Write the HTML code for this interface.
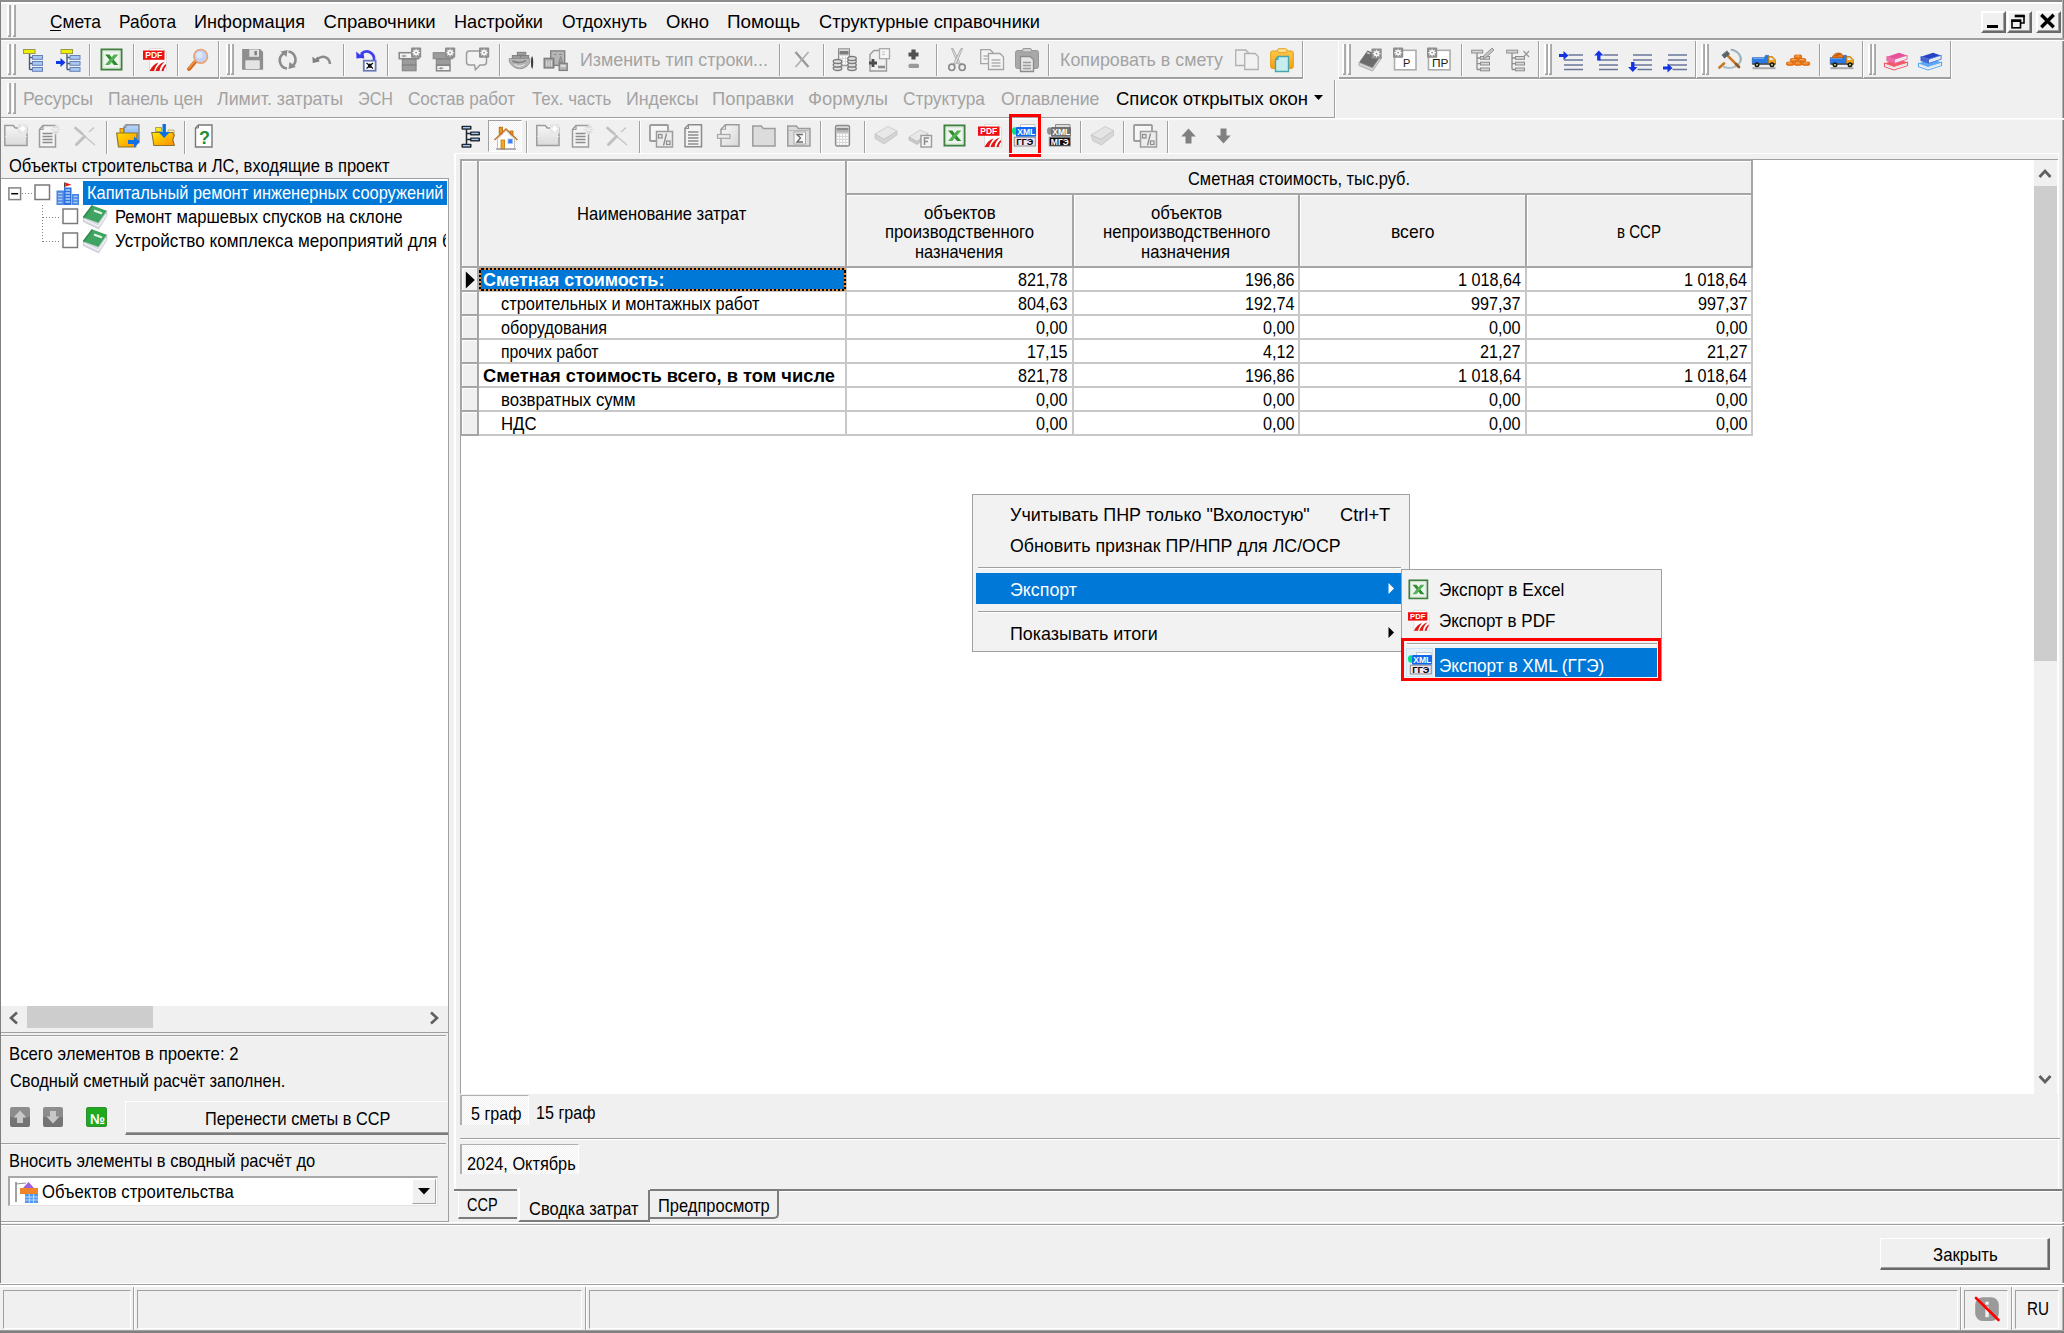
<!DOCTYPE html>
<html><head><meta charset="utf-8"><title>Smeta</title>
<style>
html,body{margin:0;padding:0;}
body{width:2064px;height:1333px;overflow:hidden;background:#f0f0f0;position:relative;font-family:"Liberation Sans",sans-serif;}
div,span,svg{position:absolute;box-sizing:border-box;}
span{white-space:pre;line-height:1;transform-origin:0 0;}
svg{overflow:visible;}
</style></head><body>
<div style="left:0px;top:0px;width:2064px;height:2px;background:#8c8c8c;"></div>
<div style="left:0px;top:2px;width:2064px;height:2px;background:#ffffff;"></div>
<div style="left:0px;top:2px;width:1px;height:1281px;background:#808080;"></div>
<div style="left:2062px;top:0px;width:1px;height:1333px;background:#b4b4b4;"></div>
<div style="left:2063px;top:0px;width:1px;height:1333px;background:#7c7c7c;"></div>
<div style="left:0px;top:1331px;width:2064px;height:2px;background:#808080;"></div>
<svg style="left:7px;top:5px;" width="4" height="32" viewBox="0 0 4 32"><rect x="0" y="0" width="2.200" height="32" fill="#fff"/><rect x="2.200" y="0" width="1.700" height="32" fill="#a0a0a0"/><rect x="1" y="30.5" width="2.500" height="1.500" fill="#a0a0a0"/></svg>
<svg style="left:11.8px;top:5px;" width="4" height="32" viewBox="0 0 4 32"><rect x="0" y="0" width="2.200" height="32" fill="#fff"/><rect x="2.200" y="0" width="1.700" height="32" fill="#a0a0a0"/><rect x="1" y="30.5" width="2.500" height="1.500" fill="#a0a0a0"/></svg>
<span style="left:50.00px;top:13.24px;font-size:18.5px;color:#000;transform:scaleX(0.9390);">Смета</span>
<span style="left:119.00px;top:13.24px;font-size:18.5px;color:#000;transform:scaleX(0.9337);">Работа</span>
<span style="left:194.00px;top:13.24px;font-size:18.5px;color:#000;transform:scaleX(0.9799);">Информация</span>
<span style="left:323.60px;top:13.24px;font-size:18.5px;color:#000;">Справочники</span>
<span style="left:454.00px;top:13.24px;font-size:18.5px;color:#000;transform:scaleX(0.9811);">Настройки</span>
<span style="left:562.00px;top:13.24px;font-size:18.5px;color:#000;transform:scaleX(0.9449);">Отдохнуть</span>
<span style="left:666.00px;top:13.24px;font-size:18.5px;color:#000;">Окно</span>
<span style="left:727.00px;top:13.24px;font-size:18.5px;color:#000;transform:scaleX(1.0216);">Помощь</span>
<span style="left:819.00px;top:13.24px;font-size:18.5px;color:#000;transform:scaleX(0.9849);">Структурные справочники</span>
<div style="left:50px;top:30px;width:11px;height:1px;background:#000;"></div>
<div style="left:0px;top:38px;width:2064px;height:2px;background:#a0a0a0;"></div>
<div style="left:0px;top:40px;width:2064px;height:1px;background:#ffffff;"></div>
<div style="left:1981px;top:10.5px;width:25px;height:22px;background:#f0f0f0;border-top:2px solid #fff;border-left:2px solid #fff;border-right:2px solid #696969;border-bottom:2px solid #696969;box-shadow:inset -1px -1px 0 #a0a0a0;"></div>
<div style="left:2007px;top:10.5px;width:25px;height:22px;background:#f0f0f0;border-top:2px solid #fff;border-left:2px solid #fff;border-right:2px solid #696969;border-bottom:2px solid #696969;box-shadow:inset -1px -1px 0 #a0a0a0;"></div>
<div style="left:2035.5px;top:10.5px;width:25px;height:22px;background:#f0f0f0;border-top:2px solid #fff;border-left:2px solid #fff;border-right:2px solid #696969;border-bottom:2px solid #696969;box-shadow:inset -1px -1px 0 #a0a0a0;"></div>
<div style="left:1987px;top:25px;width:10.5px;height:3px;background:#000;"></div>
<svg style="left:2007px;top:10.5px;" width="25" height="22" viewBox="0 0 25 22"><path d="M8.500 5h8.500v7h-3" fill="none" stroke="#000" stroke-width="1.600"/><path d="M7.700 5h10" stroke="#000" stroke-width="2.600"/><rect x="5" y="9.500" width="8.500" height="7.300" fill="none" stroke="#000" stroke-width="1.600"/><path d="M4.200 9.700h10" stroke="#000" stroke-width="2.600"/></svg>
<svg style="left:2035.5px;top:10.5px;" width="25" height="22" viewBox="0 0 25 22"><path d="M6.500 5l10 10M16.500 5l-10 10" stroke="#000" stroke-width="3.400" stroke-linecap="square"/></svg>
<div style="left:0px;top:77px;width:1303px;height:2px;background:#a0a0a0;"></div>
<div style="left:0px;top:79px;width:1303px;height:1px;background:#ffffff;"></div>
<div style="left:1338px;top:77px;width:613px;height:2px;background:#a0a0a0;"></div>
<div style="left:1338px;top:79px;width:613px;height:1px;background:#ffffff;"></div>
<div style="left:218px;top:41px;width:1px;height:38px;background:#a0a0a0;"></div>
<div style="left:219px;top:41px;width:1px;height:38px;background:#ffffff;"></div>
<div style="left:1302px;top:41px;width:1px;height:38px;background:#a0a0a0;"></div>
<div style="left:1303px;top:41px;width:1px;height:38px;background:#ffffff;"></div>
<div style="left:1338px;top:40px;width:613px;height:1px;background:#ffffff;"></div>
<div style="left:1538px;top:41px;width:1px;height:38px;background:#a0a0a0;"></div>
<div style="left:1539px;top:41px;width:1px;height:37px;background:#ffffff;"></div>
<div style="left:1695px;top:41px;width:1px;height:38px;background:#a0a0a0;"></div>
<div style="left:1696px;top:41px;width:1px;height:37px;background:#ffffff;"></div>
<div style="left:1862px;top:41px;width:1px;height:38px;background:#a0a0a0;"></div>
<div style="left:1863px;top:41px;width:1px;height:37px;background:#ffffff;"></div>
<div style="left:1950px;top:41px;width:1px;height:38px;background:#a0a0a0;"></div>
<div style="left:1951px;top:41px;width:1px;height:37px;background:#ffffff;"></div>
<div style="left:1338px;top:41px;width:1px;height:38px;background:#ffffff;"></div>
<svg style="left:7px;top:44px;" width="4" height="31" viewBox="0 0 4 31"><rect x="0" y="0" width="2.200" height="31" fill="#fff"/><rect x="2.200" y="0" width="1.700" height="31" fill="#a0a0a0"/><rect x="1" y="29.5" width="2.500" height="1.500" fill="#a0a0a0"/></svg>
<svg style="left:11.8px;top:44px;" width="4" height="31" viewBox="0 0 4 31"><rect x="0" y="0" width="2.200" height="31" fill="#fff"/><rect x="2.200" y="0" width="1.700" height="31" fill="#a0a0a0"/><rect x="1" y="29.5" width="2.500" height="1.500" fill="#a0a0a0"/></svg>
<svg style="left:225.5px;top:44px;" width="4" height="31" viewBox="0 0 4 31"><rect x="0" y="0" width="2.200" height="31" fill="#fff"/><rect x="2.200" y="0" width="1.700" height="31" fill="#a0a0a0"/><rect x="1" y="29.5" width="2.500" height="1.500" fill="#a0a0a0"/></svg>
<svg style="left:230.3px;top:44px;" width="4" height="31" viewBox="0 0 4 31"><rect x="0" y="0" width="2.200" height="31" fill="#fff"/><rect x="2.200" y="0" width="1.700" height="31" fill="#a0a0a0"/><rect x="1" y="29.5" width="2.500" height="1.500" fill="#a0a0a0"/></svg>
<svg style="left:1342px;top:44px;" width="4" height="31" viewBox="0 0 4 31"><rect x="0" y="0" width="2.200" height="31" fill="#fff"/><rect x="2.200" y="0" width="1.700" height="31" fill="#a0a0a0"/><rect x="1" y="29.5" width="2.500" height="1.500" fill="#a0a0a0"/></svg>
<svg style="left:1346.8px;top:44px;" width="4" height="31" viewBox="0 0 4 31"><rect x="0" y="0" width="2.200" height="31" fill="#fff"/><rect x="2.200" y="0" width="1.700" height="31" fill="#a0a0a0"/><rect x="1" y="29.5" width="2.500" height="1.500" fill="#a0a0a0"/></svg>
<svg style="left:1543.5px;top:44px;" width="4" height="31" viewBox="0 0 4 31"><rect x="0" y="0" width="2.200" height="31" fill="#fff"/><rect x="2.200" y="0" width="1.700" height="31" fill="#a0a0a0"/><rect x="1" y="29.5" width="2.500" height="1.500" fill="#a0a0a0"/></svg>
<svg style="left:1548.3px;top:44px;" width="4" height="31" viewBox="0 0 4 31"><rect x="0" y="0" width="2.200" height="31" fill="#fff"/><rect x="2.200" y="0" width="1.700" height="31" fill="#a0a0a0"/><rect x="1" y="29.5" width="2.500" height="1.500" fill="#a0a0a0"/></svg>
<svg style="left:1700.5px;top:44px;" width="4" height="31" viewBox="0 0 4 31"><rect x="0" y="0" width="2.200" height="31" fill="#fff"/><rect x="2.200" y="0" width="1.700" height="31" fill="#a0a0a0"/><rect x="1" y="29.5" width="2.500" height="1.500" fill="#a0a0a0"/></svg>
<svg style="left:1705.3px;top:44px;" width="4" height="31" viewBox="0 0 4 31"><rect x="0" y="0" width="2.200" height="31" fill="#fff"/><rect x="2.200" y="0" width="1.700" height="31" fill="#a0a0a0"/><rect x="1" y="29.5" width="2.500" height="1.500" fill="#a0a0a0"/></svg>
<svg style="left:1867.5px;top:44px;" width="4" height="31" viewBox="0 0 4 31"><rect x="0" y="0" width="2.200" height="31" fill="#fff"/><rect x="2.200" y="0" width="1.700" height="31" fill="#a0a0a0"/><rect x="1" y="29.5" width="2.500" height="1.500" fill="#a0a0a0"/></svg>
<svg style="left:1872.3px;top:44px;" width="4" height="31" viewBox="0 0 4 31"><rect x="0" y="0" width="2.200" height="31" fill="#fff"/><rect x="2.200" y="0" width="1.700" height="31" fill="#a0a0a0"/><rect x="1" y="29.5" width="2.500" height="1.500" fill="#a0a0a0"/></svg>
<div style="left:89px;top:44px;width:1px;height:32px;background:#a0a0a0;"></div>
<div style="left:90px;top:44px;width:1px;height:32px;background:#ffffff;"></div>
<div style="left:133px;top:44px;width:1px;height:32px;background:#a0a0a0;"></div>
<div style="left:134px;top:44px;width:1px;height:32px;background:#ffffff;"></div>
<div style="left:177px;top:44px;width:1px;height:32px;background:#a0a0a0;"></div>
<div style="left:178px;top:44px;width:1px;height:32px;background:#ffffff;"></div>
<div style="left:343px;top:44px;width:1px;height:32px;background:#a0a0a0;"></div>
<div style="left:344px;top:44px;width:1px;height:32px;background:#ffffff;"></div>
<div style="left:387px;top:44px;width:1px;height:32px;background:#a0a0a0;"></div>
<div style="left:388px;top:44px;width:1px;height:32px;background:#ffffff;"></div>
<div style="left:499px;top:44px;width:1px;height:32px;background:#a0a0a0;"></div>
<div style="left:500px;top:44px;width:1px;height:32px;background:#ffffff;"></div>
<div style="left:779px;top:44px;width:1px;height:32px;background:#a0a0a0;"></div>
<div style="left:780px;top:44px;width:1px;height:32px;background:#ffffff;"></div>
<div style="left:823px;top:44px;width:1px;height:32px;background:#a0a0a0;"></div>
<div style="left:824px;top:44px;width:1px;height:32px;background:#ffffff;"></div>
<div style="left:936px;top:44px;width:1px;height:32px;background:#a0a0a0;"></div>
<div style="left:937px;top:44px;width:1px;height:32px;background:#ffffff;"></div>
<div style="left:1048px;top:44px;width:1px;height:32px;background:#a0a0a0;"></div>
<div style="left:1049px;top:44px;width:1px;height:32px;background:#ffffff;"></div>
<div style="left:1461px;top:44px;width:1px;height:32px;background:#a0a0a0;"></div>
<div style="left:1462px;top:44px;width:1px;height:32px;background:#ffffff;"></div>
<div style="left:1819px;top:44px;width:1px;height:32px;background:#a0a0a0;"></div>
<div style="left:1820px;top:44px;width:1px;height:32px;background:#ffffff;"></div>
<span style="left:580.00px;top:51.24px;font-size:18.5px;color:#a3a3a3;transform:scaleX(0.9656);">Изменить тип строки...</span>
<span style="left:1060.00px;top:51.24px;font-size:18.5px;color:#a3a3a3;transform:scaleX(0.9628);">Копировать в смету</span>
<svg style="left:7px;top:83px;" width="4" height="31" viewBox="0 0 4 31"><rect x="0" y="0" width="2.200" height="31" fill="#fff"/><rect x="2.200" y="0" width="1.700" height="31" fill="#a0a0a0"/><rect x="1" y="29.5" width="2.500" height="1.500" fill="#a0a0a0"/></svg>
<svg style="left:11.8px;top:83px;" width="4" height="31" viewBox="0 0 4 31"><rect x="0" y="0" width="2.200" height="31" fill="#fff"/><rect x="2.200" y="0" width="1.700" height="31" fill="#a0a0a0"/><rect x="1" y="29.5" width="2.500" height="1.500" fill="#a0a0a0"/></svg>
<span style="left:23.00px;top:89.54px;font-size:18.5px;color:#a3a3a3;transform:scaleX(0.9595);">Ресурсы</span>
<span style="left:108.00px;top:89.54px;font-size:18.5px;color:#a3a3a3;transform:scaleX(0.9504);">Панель цен</span>
<span style="left:217.00px;top:89.54px;font-size:18.5px;color:#a3a3a3;transform:scaleX(0.9617);">Лимит. затраты</span>
<span style="left:358.00px;top:89.54px;font-size:18.5px;color:#a3a3a3;transform:scaleX(0.8743);">ЭСН</span>
<span style="left:408.00px;top:89.54px;font-size:18.5px;color:#a3a3a3;transform:scaleX(0.9228);">Состав работ</span>
<span style="left:531.60px;top:89.54px;font-size:18.5px;color:#a3a3a3;transform:scaleX(0.9130);">Тех. часть</span>
<span style="left:625.50px;top:89.54px;font-size:18.5px;color:#a3a3a3;transform:scaleX(0.9609);">Индексы</span>
<span style="left:711.70px;top:89.54px;font-size:18.5px;color:#a3a3a3;transform:scaleX(0.9935);">Поправки</span>
<span style="left:808.00px;top:89.54px;font-size:18.5px;color:#a3a3a3;transform:scaleX(0.9936);">Формулы</span>
<span style="left:903.00px;top:89.54px;font-size:18.5px;color:#a3a3a3;transform:scaleX(0.9341);">Структура</span>
<span style="left:1000.70px;top:89.54px;font-size:18.5px;color:#a3a3a3;transform:scaleX(0.9529);">Оглавление</span>
<span style="left:1116.00px;top:89.54px;font-size:18.5px;color:#000;">Список открытых окон</span>
<svg style="left:1314px;top:95px;" width="9" height="6" viewBox="0 0 9 6"><path d="M0 0h9l-4.500 5z" fill="#000"/></svg>
<div style="left:1334px;top:80px;width:1px;height:38px;background:#a0a0a0;"></div>
<div style="left:1335px;top:80px;width:1px;height:38px;background:#ffffff;"></div>
<div style="left:0px;top:117px;width:1335px;height:1px;background:#a0a0a0;"></div>
<div style="left:0px;top:118px;width:2064px;height:1px;background:#ffffff;"></div>
<div style="left:0px;top:119px;width:2064px;height:1px;background:#f8f8f8;"></div>
<div style="left:106px;top:121px;width:1px;height:33px;background:#a0a0a0;"></div>
<div style="left:107px;top:121px;width:1px;height:33px;background:#ffffff;"></div>
<div style="left:184px;top:121px;width:1px;height:33px;background:#a0a0a0;"></div>
<div style="left:185px;top:121px;width:1px;height:33px;background:#ffffff;"></div>
<div style="left:526px;top:121px;width:1px;height:33px;background:#a0a0a0;"></div>
<div style="left:527px;top:121px;width:1px;height:33px;background:#ffffff;"></div>
<div style="left:639px;top:121px;width:1px;height:33px;background:#a0a0a0;"></div>
<div style="left:640px;top:121px;width:1px;height:33px;background:#ffffff;"></div>
<div style="left:820px;top:121px;width:1px;height:33px;background:#a0a0a0;"></div>
<div style="left:821px;top:121px;width:1px;height:33px;background:#ffffff;"></div>
<div style="left:864px;top:121px;width:1px;height:33px;background:#a0a0a0;"></div>
<div style="left:865px;top:121px;width:1px;height:33px;background:#ffffff;"></div>
<div style="left:1080px;top:121px;width:1px;height:33px;background:#a0a0a0;"></div>
<div style="left:1081px;top:121px;width:1px;height:33px;background:#ffffff;"></div>
<div style="left:1123px;top:121px;width:1px;height:33px;background:#a0a0a0;"></div>
<div style="left:1124px;top:121px;width:1px;height:33px;background:#ffffff;"></div>
<div style="left:1167px;top:121px;width:1px;height:33px;background:#a0a0a0;"></div>
<div style="left:1168px;top:121px;width:1px;height:33px;background:#ffffff;"></div>
<div style="left:488px;top:120px;width:34px;height:32px;background:repeating-conic-gradient(#fff 0% 25%,#f0f0f0 0% 50%) 0 0/2px 2px;border-top:1px solid #a0a0a0;border-left:1px solid #a0a0a0;border-right:1px solid #fff;border-bottom:1px solid #fff;"></div>
<div style="left:1009px;top:114px;width:32px;height:43px;border:3px solid #ff0000;"></div>
<span style="left:8.50px;top:157.24px;font-size:18.5px;color:#000;transform:scaleX(0.8939);">Объекты строительства и ЛС, входящие в проект</span>
<div style="left:0px;top:178px;width:449px;height:855px;background:#ffffff;border:1px solid #a0a0a0;border-left:1px solid #808080;"></div>
<div style="left:83px;top:181px;width:364px;height:24px;background:#0078d7;"></div>
<span style="left:87.00px;top:184.24px;font-size:18.5px;color:#fff;transform:scaleX(0.8872);">Капитальный ремонт инженерных сооружений</span>
<span style="left:115.40px;top:208.24px;font-size:18.5px;color:#000;transform:scaleX(0.8967);">Ремонт маршевых спусков на склоне</span>
<div style="left:0;top:0;width:446px;height:400px;overflow:hidden">
<span style="left:115.40px;top:232.24px;font-size:18.5px;color:#000;transform:scaleX(0.9272);">Устройство комплекса мероприятий для бе</span>
</div>
<svg style="left:8px;top:187px;" width="14" height="14" viewBox="0 0 14 14"><rect x="0.900" y="0.900" width="11.700" height="11.700" fill="#fff" stroke="#848484" stroke-width="1.500"/><path d="M3.200 6.700h7" stroke="#000" stroke-width="1.500"/></svg>
<div style="left:22px;top:193px;width:10px;height:1px;background:repeating-linear-gradient(90deg,#808080 0 1px,transparent 1px 3px);"></div>
<div style="left:42px;top:205px;width:1px;height:37px;background:repeating-linear-gradient(180deg,#808080 0 1px,transparent 1px 3px);"></div>
<div style="left:43px;top:217px;width:17px;height:1px;background:repeating-linear-gradient(90deg,#808080 0 1px,transparent 1px 3px);"></div>
<div style="left:43px;top:241px;width:17px;height:1px;background:repeating-linear-gradient(90deg,#808080 0 1px,transparent 1px 3px);"></div>
<svg style="left:33.5px;top:184px;" width="17" height="17" viewBox="0 0 17 17"><rect x="1" y="1" width="14.500" height="14.500" fill="#fff" stroke="#7a7a7a" stroke-width="1.500"/></svg>
<svg style="left:62px;top:207.7px;" width="17" height="17" viewBox="0 0 17 17"><rect x="1" y="1" width="14.500" height="14.500" fill="#fff" stroke="#7a7a7a" stroke-width="1.500"/></svg>
<svg style="left:62px;top:231.7px;" width="17" height="17" viewBox="0 0 17 17"><rect x="1" y="1" width="14.500" height="14.500" fill="#fff" stroke="#7a7a7a" stroke-width="1.500"/></svg>
<div style="left:1px;top:1006px;width:447px;height:26px;background:#f0f0f0;"></div>
<div style="left:27px;top:1006px;width:126px;height:22px;background:#cdcdcd;"></div>
<svg style="left:8px;top:1011px;" width="12" height="14" viewBox="0 0 12 14"><path d="M9 1.500L3 7l6 5.500" fill="none" stroke="#606060" stroke-width="2.6"/></svg>
<svg style="left:428px;top:1011px;" width="12" height="14" viewBox="0 0 12 14"><path d="M3 1.500L9 7l-6 5.500" fill="none" stroke="#606060" stroke-width="2.6"/></svg>
<div style="left:1px;top:1035px;width:445px;height:1px;background:#a0a0a0;"></div>
<div style="left:1px;top:1036px;width:445px;height:1px;background:#f8f8f8;"></div>
<span style="left:8.50px;top:1045.24px;font-size:18.5px;color:#000;transform:scaleX(0.9043);">Всего элементов в проекте: 2</span>
<span style="left:9.70px;top:1072.24px;font-size:18.5px;color:#000;transform:scaleX(0.8873);">Сводный сметный расчёт заполнен.</span>
<div style="left:10px;top:1107px;width:20px;height:20px;border-radius:2px;background:linear-gradient(#8e8e8e,#8a8a8a 50%,#767676 52%,#727272);"></div>
<div style="left:43px;top:1107px;width:20px;height:20px;border-radius:2px;background:linear-gradient(#8e8e8e,#8a8a8a 50%,#767676 52%,#727272);"></div>
<svg style="left:10px;top:1107px;" width="20" height="20" viewBox="0 0 20 20"><path d="M10 3.500l6.500 7h-3.500v5.500h-6v-5.500h-3.500z" fill="#c8c8c8"/></svg>
<svg style="left:43px;top:1107px;" width="20" height="20" viewBox="0 0 20 20"><path d="M10 16.500l6.500-7h-3.500v-5.500h-6v5.500h-3.500z" fill="#c8c8c8"/></svg>
<div style="left:86px;top:1107px;width:21px;height:20px;background:#1fa91f;border-radius:2px;border:1px solid #2f8f2f;"></div>
<span style="left:89.50px;top:1112.05px;font-size:14px;color:#fff;font-weight:bold;transform:scaleX(0.9610);">№</span>
<div style="left:125px;top:1101px;width:323px;height:34px;background:#f0f0f0;border-top:1px solid #fff;border-left:1px solid #fff;border-bottom:2px solid #7c7c7c;box-shadow:inset 0 -1px 0 #a0a0a0;"></div>
<span style="left:205.40px;top:1110.24px;font-size:18.5px;color:#000;transform:scaleX(0.8805);">Перенести сметы в ССР</span>
<div style="left:1px;top:1143px;width:445px;height:1px;background:#a0a0a0;"></div>
<div style="left:1px;top:1144px;width:445px;height:1px;background:#f8f8f8;"></div>
<span style="left:8.50px;top:1152.24px;font-size:18.5px;color:#000;transform:scaleX(0.8909);">Вносить элементы в сводный расчёт до</span>
<div style="left:8px;top:1176px;width:430px;height:30px;background:#ffffff;border-top:2px solid #a8a8a8;border-left:2px solid #a8a8a8;border-right:1px solid #e3e3e3;border-bottom:1px solid #e3e3e3;"></div>
<div style="left:412px;top:1179px;width:24px;height:25px;background:#f0f0f0;border-top:1px solid #fff;border-left:1px solid #fff;border-right:1px solid #a0a0a0;border-bottom:1px solid #a0a0a0;"></div>
<svg style="left:418px;top:1188px;" width="12" height="7" viewBox="0 0 12 7"><path d="M0 0h12l-6 6.500z" fill="#000"/></svg>
<span style="left:41.90px;top:1183.24px;font-size:18.5px;color:#000;transform:scaleX(0.9013);">Объектов строительства</span>
<div style="left:448px;top:1033px;width:1px;height:189px;background:#a0a0a0;"></div>
<div style="left:0px;top:1221px;width:449px;height:1px;background:#a0a0a0;"></div>
<div style="left:454px;top:153px;width:1605px;height:1px;background:#ffffff;"></div>
<div style="left:454px;top:153px;width:2px;height:1037px;background:#ffffff;"></div>
<div style="left:2058px;top:153px;width:1px;height:1037px;background:#ffffff;"></div>
<div style="left:460px;top:159px;width:1598px;height:935px;background:#ffffff;border-top:1px solid #a0a0a0;border-left:1px solid #a0a0a0;"></div>
<div style="left:2034px;top:160px;width:23px;height:934px;background:#f0f0f0;"></div>
<div style="left:2034px;top:186px;width:23px;height:475px;background:#cdcdcd;"></div>
<svg style="left:2038px;top:167px;" width="14" height="12" viewBox="0 0 14 12"><path d="M1.500 10L7 4l5.500 6" fill="none" stroke="#606060" stroke-width="2.800"/></svg>
<svg style="left:2038px;top:1074px;" width="14" height="12" viewBox="0 0 14 12"><path d="M1.500 2L7 8l5.500-6" fill="none" stroke="#606060" stroke-width="2.800"/></svg>
<div style="left:460px;top:159px;width:1293px;height:109px;background:#a6a6a6;"></div>
<div style="left:460px;top:159px;width:2px;height:277px;background:#a6a6a6;"></div>
<div style="left:462px;top:161px;width:17px;height:107px;background:#f0f0f0;border-right:2px solid #a6a6a6;border-bottom:2px solid #a6a6a6;box-shadow:inset 1px 1px 0 #fff;"></div>
<div style="left:479px;top:161px;width:368px;height:107px;background:#f0f0f0;border-right:2px solid #a6a6a6;border-bottom:2px solid #a6a6a6;box-shadow:inset 1px 1px 0 #fff;"></div>
<div style="left:847px;top:161px;width:906px;height:34px;background:#f0f0f0;border-right:2px solid #a6a6a6;border-bottom:2px solid #a6a6a6;box-shadow:inset 1px 1px 0 #fff;"></div>
<div style="left:847px;top:195px;width:227px;height:73px;background:#f0f0f0;border-right:2px solid #a6a6a6;border-bottom:2px solid #a6a6a6;box-shadow:inset 1px 1px 0 #fff;"></div>
<div style="left:1074px;top:195px;width:226px;height:73px;background:#f0f0f0;border-right:2px solid #a6a6a6;border-bottom:2px solid #a6a6a6;box-shadow:inset 1px 1px 0 #fff;"></div>
<div style="left:1300px;top:195px;width:227px;height:73px;background:#f0f0f0;border-right:2px solid #a6a6a6;border-bottom:2px solid #a6a6a6;box-shadow:inset 1px 1px 0 #fff;"></div>
<div style="left:1527px;top:195px;width:226px;height:73px;background:#f0f0f0;border-right:2px solid #a6a6a6;border-bottom:2px solid #a6a6a6;box-shadow:inset 1px 1px 0 #fff;"></div>
<span style="left:577.00px;top:205.24px;font-size:18.5px;color:#000;transform:scaleX(0.8964);">Наименование затрат</span>
<span style="left:1188.00px;top:169.74px;font-size:18.5px;color:#000;transform:scaleX(0.8876);">Сметная стоимость, тыс.руб.</span>
<span style="left:924.00px;top:203.74px;font-size:18.5px;color:#000;transform:scaleX(0.9085);">объектов</span>
<span style="left:885.00px;top:223.24px;font-size:18.5px;color:#000;transform:scaleX(0.9047);">производственного</span>
<span style="left:915.00px;top:242.74px;font-size:18.5px;color:#000;transform:scaleX(0.8855);">назначения</span>
<span style="left:1150.90px;top:203.74px;font-size:18.5px;color:#000;transform:scaleX(0.9021);">объектов</span>
<span style="left:1102.70px;top:223.24px;font-size:18.5px;color:#000;transform:scaleX(0.9033);">непроизводственного</span>
<span style="left:1141.00px;top:242.74px;font-size:18.5px;color:#000;transform:scaleX(0.8956);">назначения</span>
<span style="left:1390.60px;top:223.24px;font-size:18.5px;color:#000;transform:scaleX(0.9477);">всего</span>
<span style="left:1617.00px;top:223.24px;font-size:18.5px;color:#000;transform:scaleX(0.8143);">в ССР</span>
<div style="left:462px;top:268px;width:17px;height:24px;background:#f0f0f0;border-right:2px solid #a6a6a6;border-bottom:2px solid #a6a6a6;box-shadow:inset 1px 1px 0 #fff;"></div>
<div style="left:479px;top:290px;width:1274px;height:2px;background:#c8c8c8;"></div>
<div style="left:845px;top:268px;width:2px;height:24px;background:#c8c8c8;"></div>
<div style="left:1072px;top:268px;width:2px;height:24px;background:#c8c8c8;"></div>
<div style="left:1298px;top:268px;width:2px;height:24px;background:#c8c8c8;"></div>
<div style="left:1525px;top:268px;width:2px;height:24px;background:#c8c8c8;"></div>
<div style="left:1751px;top:268px;width:2px;height:24px;background:#c8c8c8;"></div>
<div style="left:479px;top:268px;width:367px;height:23px;background:#000;"></div>
<div style="left:479px;top:268px;width:367px;height:23px;border:2px dotted #e8903c;"></div>
<div style="left:481px;top:270px;width:363px;height:19px;background:#0078d7;"></div>
<span style="left:482.90px;top:270.54px;font-size:18.5px;color:#fff;font-weight:bold;transform:scaleX(0.9715);">Сметная стоимость:</span>
<span style="left:1018.00px;top:270.54px;font-size:18.5px;color:#000;transform:scaleX(0.8747);">821,78</span>
<span style="left:1244.50px;top:270.54px;font-size:18.5px;color:#000;transform:scaleX(0.8747);">196,86</span>
<span style="left:1457.50px;top:270.54px;font-size:18.5px;color:#000;transform:scaleX(0.8748);">1 018,64</span>
<span style="left:1684.00px;top:270.54px;font-size:18.5px;color:#000;transform:scaleX(0.8748);">1 018,64</span>
<div style="left:462px;top:292px;width:17px;height:24px;background:#f0f0f0;border-right:2px solid #a6a6a6;border-bottom:2px solid #a6a6a6;box-shadow:inset 1px 1px 0 #fff;"></div>
<div style="left:479px;top:314px;width:1274px;height:2px;background:#c8c8c8;"></div>
<div style="left:845px;top:292px;width:2px;height:24px;background:#c8c8c8;"></div>
<div style="left:1072px;top:292px;width:2px;height:24px;background:#c8c8c8;"></div>
<div style="left:1298px;top:292px;width:2px;height:24px;background:#c8c8c8;"></div>
<div style="left:1525px;top:292px;width:2px;height:24px;background:#c8c8c8;"></div>
<div style="left:1751px;top:292px;width:2px;height:24px;background:#c8c8c8;"></div>
<span style="left:500.90px;top:294.54px;font-size:18.5px;color:#000;transform:scaleX(0.8850);">строительных и монтажных работ</span>
<span style="left:1018.00px;top:294.54px;font-size:18.5px;color:#000;transform:scaleX(0.8747);">804,63</span>
<span style="left:1244.50px;top:294.54px;font-size:18.5px;color:#000;transform:scaleX(0.8747);">192,74</span>
<span style="left:1471.00px;top:294.54px;font-size:18.5px;color:#000;transform:scaleX(0.8747);">997,37</span>
<span style="left:1697.50px;top:294.54px;font-size:18.5px;color:#000;transform:scaleX(0.8747);">997,37</span>
<div style="left:462px;top:316px;width:17px;height:24px;background:#f0f0f0;border-right:2px solid #a6a6a6;border-bottom:2px solid #a6a6a6;box-shadow:inset 1px 1px 0 #fff;"></div>
<div style="left:479px;top:338px;width:1274px;height:2px;background:#c8c8c8;"></div>
<div style="left:845px;top:316px;width:2px;height:24px;background:#c8c8c8;"></div>
<div style="left:1072px;top:316px;width:2px;height:24px;background:#c8c8c8;"></div>
<div style="left:1298px;top:316px;width:2px;height:24px;background:#c8c8c8;"></div>
<div style="left:1525px;top:316px;width:2px;height:24px;background:#c8c8c8;"></div>
<div style="left:1751px;top:316px;width:2px;height:24px;background:#c8c8c8;"></div>
<span style="left:500.90px;top:318.54px;font-size:18.5px;color:#000;transform:scaleX(0.8736);">оборудования</span>
<span style="left:1036.00px;top:318.54px;font-size:18.5px;color:#000;transform:scaleX(0.8746);">0,00</span>
<span style="left:1262.50px;top:318.54px;font-size:18.5px;color:#000;transform:scaleX(0.8746);">0,00</span>
<span style="left:1489.00px;top:318.54px;font-size:18.5px;color:#000;transform:scaleX(0.8746);">0,00</span>
<span style="left:1715.50px;top:318.54px;font-size:18.5px;color:#000;transform:scaleX(0.8746);">0,00</span>
<div style="left:462px;top:340px;width:17px;height:24px;background:#f0f0f0;border-right:2px solid #a6a6a6;border-bottom:2px solid #a6a6a6;box-shadow:inset 1px 1px 0 #fff;"></div>
<div style="left:479px;top:362px;width:1274px;height:2px;background:#c8c8c8;"></div>
<div style="left:845px;top:340px;width:2px;height:24px;background:#c8c8c8;"></div>
<div style="left:1072px;top:340px;width:2px;height:24px;background:#c8c8c8;"></div>
<div style="left:1298px;top:340px;width:2px;height:24px;background:#c8c8c8;"></div>
<div style="left:1525px;top:340px;width:2px;height:24px;background:#c8c8c8;"></div>
<div style="left:1751px;top:340px;width:2px;height:24px;background:#c8c8c8;"></div>
<span style="left:500.90px;top:342.54px;font-size:18.5px;color:#000;transform:scaleX(0.8554);">прочих работ</span>
<span style="left:1027.00px;top:342.54px;font-size:18.5px;color:#000;transform:scaleX(0.8748);">17,15</span>
<span style="left:1262.50px;top:342.54px;font-size:18.5px;color:#000;transform:scaleX(0.8746);">4,12</span>
<span style="left:1480.00px;top:342.54px;font-size:18.5px;color:#000;transform:scaleX(0.8748);">21,27</span>
<span style="left:1706.50px;top:342.54px;font-size:18.5px;color:#000;transform:scaleX(0.8748);">21,27</span>
<div style="left:462px;top:364px;width:17px;height:24px;background:#f0f0f0;border-right:2px solid #a6a6a6;border-bottom:2px solid #a6a6a6;box-shadow:inset 1px 1px 0 #fff;"></div>
<div style="left:479px;top:386px;width:1274px;height:2px;background:#c8c8c8;"></div>
<div style="left:845px;top:364px;width:2px;height:24px;background:#c8c8c8;"></div>
<div style="left:1072px;top:364px;width:2px;height:24px;background:#c8c8c8;"></div>
<div style="left:1298px;top:364px;width:2px;height:24px;background:#c8c8c8;"></div>
<div style="left:1525px;top:364px;width:2px;height:24px;background:#c8c8c8;"></div>
<div style="left:1751px;top:364px;width:2px;height:24px;background:#c8c8c8;"></div>
<span style="left:482.90px;top:366.54px;font-size:18.5px;color:#000;font-weight:bold;transform:scaleX(0.9898);">Сметная стоимость всего, в том числе</span>
<span style="left:1018.00px;top:366.54px;font-size:18.5px;color:#000;transform:scaleX(0.8747);">821,78</span>
<span style="left:1244.50px;top:366.54px;font-size:18.5px;color:#000;transform:scaleX(0.8747);">196,86</span>
<span style="left:1457.50px;top:366.54px;font-size:18.5px;color:#000;transform:scaleX(0.8748);">1 018,64</span>
<span style="left:1684.00px;top:366.54px;font-size:18.5px;color:#000;transform:scaleX(0.8748);">1 018,64</span>
<div style="left:462px;top:388px;width:17px;height:24px;background:#f0f0f0;border-right:2px solid #a6a6a6;border-bottom:2px solid #a6a6a6;box-shadow:inset 1px 1px 0 #fff;"></div>
<div style="left:479px;top:410px;width:1274px;height:2px;background:#c8c8c8;"></div>
<div style="left:845px;top:388px;width:2px;height:24px;background:#c8c8c8;"></div>
<div style="left:1072px;top:388px;width:2px;height:24px;background:#c8c8c8;"></div>
<div style="left:1298px;top:388px;width:2px;height:24px;background:#c8c8c8;"></div>
<div style="left:1525px;top:388px;width:2px;height:24px;background:#c8c8c8;"></div>
<div style="left:1751px;top:388px;width:2px;height:24px;background:#c8c8c8;"></div>
<span style="left:500.90px;top:390.54px;font-size:18.5px;color:#000;transform:scaleX(0.9076);">возвратных сумм</span>
<span style="left:1036.00px;top:390.54px;font-size:18.5px;color:#000;transform:scaleX(0.8746);">0,00</span>
<span style="left:1262.50px;top:390.54px;font-size:18.5px;color:#000;transform:scaleX(0.8746);">0,00</span>
<span style="left:1489.00px;top:390.54px;font-size:18.5px;color:#000;transform:scaleX(0.8746);">0,00</span>
<span style="left:1715.50px;top:390.54px;font-size:18.5px;color:#000;transform:scaleX(0.8746);">0,00</span>
<div style="left:462px;top:412px;width:17px;height:24px;background:#f0f0f0;border-right:2px solid #a6a6a6;border-bottom:2px solid #a6a6a6;box-shadow:inset 1px 1px 0 #fff;"></div>
<div style="left:479px;top:434px;width:1274px;height:2px;background:#c8c8c8;"></div>
<div style="left:845px;top:412px;width:2px;height:24px;background:#c8c8c8;"></div>
<div style="left:1072px;top:412px;width:2px;height:24px;background:#c8c8c8;"></div>
<div style="left:1298px;top:412px;width:2px;height:24px;background:#c8c8c8;"></div>
<div style="left:1525px;top:412px;width:2px;height:24px;background:#c8c8c8;"></div>
<div style="left:1751px;top:412px;width:2px;height:24px;background:#c8c8c8;"></div>
<span style="left:500.90px;top:414.54px;font-size:18.5px;color:#000;transform:scaleX(0.9070);">НДС</span>
<span style="left:1036.00px;top:414.54px;font-size:18.5px;color:#000;transform:scaleX(0.8746);">0,00</span>
<span style="left:1262.50px;top:414.54px;font-size:18.5px;color:#000;transform:scaleX(0.8746);">0,00</span>
<span style="left:1489.00px;top:414.54px;font-size:18.5px;color:#000;transform:scaleX(0.8746);">0,00</span>
<span style="left:1715.50px;top:414.54px;font-size:18.5px;color:#000;transform:scaleX(0.8746);">0,00</span>
<svg style="left:465px;top:270.5px;" width="11" height="18" viewBox="0 0 11 18"><path d="M0.800 0.500v17l9-8.500z" fill="#000"/></svg>
<div style="left:460px;top:1095px;width:69px;height:30px;background:repeating-conic-gradient(#fff 0% 25%,#f0f0f0 0% 50%) 0 0/2px 2px;border-left:2px solid #b0b0b0;border-top:1px solid #b0b0b0;border-right:1px solid #fff;"></div>
<span style="left:470.50px;top:1104.94px;font-size:18.5px;color:#000;transform:scaleX(0.8709);">5 граф</span>
<span style="left:535.60px;top:1103.74px;font-size:18.5px;color:#000;transform:scaleX(0.8701);">15 граф</span>
<div style="left:460px;top:1138px;width:1600px;height:1px;background:#a0a0a0;"></div>
<div style="left:460px;top:1139px;width:1600px;height:1px;background:#ffffff;"></div>
<div style="left:460px;top:1144px;width:119px;height:30px;background:repeating-conic-gradient(#fff 0% 25%,#f0f0f0 0% 50%) 0 0/2px 2px;border-left:2px solid #b0b0b0;border-top:1px solid #b0b0b0;border-right:1px solid #fff;"></div>
<span style="left:466.50px;top:1154.74px;font-size:18.5px;color:#000;transform:scaleX(0.8827);">2024, Октябрь</span>
<div style="left:454px;top:1189px;width:63px;height:2px;background:#7c7c7c;"></div>
<div style="left:650px;top:1189px;width:1412px;height:2px;background:#7c7c7c;"></div>
<div style="left:454px;top:1191px;width:63px;height:1px;background:#ffffff;"></div>
<div style="left:652px;top:1191px;width:1410px;height:1px;background:#ffffff;"></div>
<div style="left:458px;top:1191px;width:59px;height:27.5px;background:#f0f0f0;border-bottom:2px solid #7c7c7c;border-left:1px solid #fff;"></div>
<span style="left:466.50px;top:1196.24px;font-size:18.5px;color:#000;transform:scaleX(0.7859);">ССР</span>
<div style="left:518px;top:1188px;width:132px;height:34px;background:#f0f0f0;border-bottom:2px solid #7c7c7c;border-left:2px solid #fff;"></div>
<div style="left:648px;top:1190px;width:2px;height:32px;background:#7c7c7c;"></div>
<span style="left:529.30px;top:1199.74px;font-size:18.5px;color:#000;transform:scaleX(0.8897);">Сводка затрат</span>
<div style="left:650px;top:1191px;width:129px;height:27.5px;background:#f0f0f0;border-bottom:2px solid #7c7c7c;border-right:2px solid #7c7c7c;border-radius:0 0 5px 0;"></div>
<span style="left:658.40px;top:1196.74px;font-size:18.5px;color:#000;transform:scaleX(0.8909);">Предпросмотр</span>
<div style="left:0px;top:1222px;width:2064px;height:1px;background:#ffffff;"></div>
<div style="left:0px;top:1224px;width:2064px;height:1px;background:#a0a0a0;"></div>
<div style="left:0px;top:1225px;width:2064px;height:1px;background:#ffffff;"></div>
<div style="left:0px;top:1283px;width:2064px;height:1px;background:#ffffff;"></div>
<div style="left:0px;top:1284px;width:2064px;height:1px;background:#a0a0a0;"></div>
<div style="left:0px;top:1285px;width:2064px;height:2px;background:#ffffff;"></div>
<div style="left:1880px;top:1238px;width:170px;height:32px;background:#f0f0f0;border-top:1px solid #fff;border-left:1px solid #fff;border-right:2px solid #696969;border-bottom:2px solid #696969;box-shadow:inset -1px -1px 0 #a0a0a0;"></div>
<span style="left:1932.70px;top:1245.74px;font-size:18.5px;color:#000;transform:scaleX(0.9079);">Закрыть</span>
<div style="left:3px;top:1290px;width:128px;height:39px;border-top:1px solid #a0a0a0;border-left:1px solid #a0a0a0;border-right:1px solid #fff;border-bottom:1px solid #fff;"></div>
<div style="left:137px;top:1290px;width:445px;height:39px;border-top:1px solid #a0a0a0;border-left:1px solid #a0a0a0;border-right:1px solid #fff;border-bottom:1px solid #fff;"></div>
<div style="left:589px;top:1290px;width:1369px;height:39px;border-top:1px solid #a0a0a0;border-left:1px solid #a0a0a0;border-right:1px solid #fff;border-bottom:1px solid #fff;"></div>
<div style="left:1964px;top:1290px;width:44px;height:39px;border-top:1px solid #a0a0a0;border-left:1px solid #a0a0a0;border-right:1px solid #fff;border-bottom:1px solid #fff;"></div>
<div style="left:2015px;top:1290px;width:44px;height:39px;border-top:1px solid #a0a0a0;border-left:1px solid #a0a0a0;border-right:1px solid #fff;border-bottom:1px solid #fff;"></div>
<div style="left:133px;top:1287px;width:1px;height:43px;background:#a0a0a0;"></div>
<div style="left:134px;top:1287px;width:1px;height:43px;background:#ffffff;"></div>
<div style="left:585px;top:1287px;width:1px;height:43px;background:#a0a0a0;"></div>
<div style="left:586px;top:1287px;width:1px;height:43px;background:#ffffff;"></div>
<div style="left:1960px;top:1287px;width:1px;height:43px;background:#a0a0a0;"></div>
<div style="left:1961px;top:1287px;width:1px;height:43px;background:#ffffff;"></div>
<div style="left:2011px;top:1287px;width:1px;height:43px;background:#a0a0a0;"></div>
<div style="left:2012px;top:1287px;width:1px;height:43px;background:#ffffff;"></div>
<div style="left:0px;top:1330px;width:2064px;height:1px;background:#a0a0a0;"></div>
<span style="left:2026.50px;top:1300.24px;font-size:18.5px;color:#000;transform:scaleX(0.8229);">RU</span>
<svg style="left:1974px;top:1296px;" width="26" height="26" viewBox="0 0 26 26"><rect x="1.200" y="1.300" width="23.600" height="23.700" rx="7.500" fill="#9a9a9a"/><rect x="11.400" y="5.700" width="3.300" height="3" fill="#f4f4f4"/><rect x="11.400" y="10.700" width="3.300" height="10.400" fill="#f4f4f4"/><path d="M2 2l22.500 22" stroke="#ff0000" stroke-width="2.600" stroke-linecap="round"/></svg>
<svg style="left:22px;top:48px" width="24" height="24" viewBox="0 0 24 24"><rect x="1.5" y="1.500" width="11.500" height="4" fill="#eeee00" stroke="#9a9a46"/><path d="M7.5 6v15.500M7.5 9.500h3M7.5 15.500h3M7.5 21.500h3" stroke="#485a84" fill="none" stroke-width="1.400"/><rect x="10.5" y="7.5" width="10" height="3.800" fill="#a6c8f2" stroke="#6880b4"/><rect x="10.5" y="13.5" width="10" height="3.800" fill="#a6c8f2" stroke="#6880b4"/><rect x="10.5" y="19.5" width="10" height="3.800" fill="#a6c8f2" stroke="#6880b4"/></svg>
<svg style="left:55.5px;top:48px" width="24" height="24" viewBox="0 0 24 24"><path d="M0 13h4.500v-3l5 4.500l-5 4.500v-3h-4.500z" fill="#1038e8"/><rect x="5.0" y="1.500" width="11.500" height="4" fill="#eeee00" stroke="#9a9a46"/><path d="M11.0 6v15.500M11.0 9.500h3M11.0 15.500h3M11.0 21.500h3" stroke="#485a84" fill="none" stroke-width="1.400"/><rect x="14.0" y="7.5" width="10" height="3.800" fill="#a6c8f2" stroke="#6880b4"/><rect x="14.0" y="13.5" width="10" height="3.800" fill="#a6c8f2" stroke="#6880b4"/><rect x="14.0" y="19.5" width="10" height="3.800" fill="#a6c8f2" stroke="#6880b4"/></svg>
<svg style="left:100px;top:48px" width="24" height="24" viewBox="0 0 24 24"><rect x="1.500" y="1.500" width="20" height="20" fill="#eef4ee" stroke="#3f803f" stroke-width="2"/><rect x="3" y="3" width="17" height="17" fill="none" stroke="#cfe2cf" stroke-width="1"/><path d="M5 6.500h4.300l9 10.500h-4.300z" fill="#2e8c2e"/><path d="M18.300 6.500h-4.300l-9 10.500h4.300z" fill="#54b054"/></svg>
<svg style="left:143px;top:48px" width="24" height="24" viewBox="0 0 24 24"><path d="M6.500 0.500h13l4 4v18.500h-17z" fill="#fff" stroke="#dcdcdc"/><rect x="0" y="2.500" width="21.500" height="9.300" fill="#ee1010"/><text x="10.800" y="10.300" font-size="8.600" font-weight="bold" fill="#fff" text-anchor="middle" font-family="Liberation Sans,sans-serif" textLength="17" lengthAdjust="spacingAndGlyphs">PDF</text><path d="M6.500 23c2.500-5 5.500-7.500 9-8.500c-2 2.500-3.500 5.500-4.500 8.500zM12.500 23c1.500-4.500 4.500-8 9.500-9.500c-3.500 3-5 6-5.500 9.500z" fill="#e01818"/><path d="M18.500 23c0.500-3 2-5.500 4.500-7v2c-1.200 1.500-2 3-2.200 5z" fill="#e01818"/></svg>
<svg style="left:186px;top:48px" width="24" height="24" viewBox="0 0 24 24"><path d="M9.500 13.500L3 21" stroke="#d2691e" stroke-width="3.800" stroke-linecap="round"/><path d="M9 13L3 20" stroke="#f09a50" stroke-width="1.200" stroke-linecap="round"/><circle cx="14.700" cy="8.300" r="6.800" fill="#c4d4f6" stroke="#e8a070" stroke-width="1.600"/><circle cx="13.500" cy="7" r="3.200" fill="#e4ecfc" opacity="0.800"/></svg>
<svg style="left:241px;top:48px" width="24" height="24" viewBox="0 0 24 24"><path d="M1.100 1h18l3 3v17.800h-21z" fill="#8e8e8e"/><rect x="4.300" y="12.200" width="14.500" height="8.700" rx="0.800" fill="#e4e4e4"/><rect x="8.300" y="1.500" width="9.700" height="7.300" fill="#e2e2e2"/><rect x="13.400" y="3" width="2.500" height="4.300" fill="#808080"/></svg>
<svg style="left:276px;top:48px" width="24" height="24" viewBox="0 0 24 24"><path d="M11 20.500A8.200 8.200 0 0 1 7.500 5.500" fill="none" stroke="#8c8c8c" stroke-width="2.600"/><path d="M4.500 3.500l7-1.500l-1 7z" fill="#8c8c8c"/><path d="M12.500 3.500A8.200 8.200 0 0 1 17 17.500" fill="none" stroke="#8c8c8c" stroke-width="2.600"/><path d="M20 19l-7.500 2l1-7z" fill="#8c8c8c"/></svg>
<svg style="left:310px;top:48px" width="24" height="24" viewBox="0 0 24 24"><path d="M20 16c-0.500-6-6.500-10-12.500-5" fill="none" stroke="#8c8c8c" stroke-width="2.500"/><path d="M2.300 8.700l0.500 6.300l6.500-1.500z" fill="#808080"/><path d="M2.500 14.500l5-6l2 5z" fill="#808080"/></svg>
<svg style="left:354.5px;top:48px" width="24" height="24" viewBox="0 0 24 24"><path d="M19 12.500c1-8-7.500-12-13-6.500" fill="none" stroke="#4040ee" stroke-width="2.700"/><path d="M1.200 3.500l0.300 7l6.800-0.800z" fill="#3a3af0"/><path d="M1.300 9.500l7-5.500l1 6.500z" fill="#3a3af0"/><rect x="8.800" y="12.700" width="11.800" height="10" fill="#fff" stroke="#6878b8" stroke-width="1.800"/><path d="M11.500 15l6.500 5.500M18 15l-6.500 5.500" stroke="#000" stroke-width="1.100"/><ellipse cx="14.750" cy="17.700" rx="1.800" ry="2.300" fill="#101018"/></svg>
<svg style="left:397.5px;top:48px" width="24" height="24" viewBox="0 0 24 24"><rect x="1.200" y="4.700" width="19.500" height="6" fill="#f4f4f4" stroke="#868686" stroke-width="1.500"/><path d="M3.500 8h5M6 6.800v2.400" stroke="#8c8c8c" stroke-width="1.100"/><rect x="4.300" y="11.300" width="13.800" height="5.700" fill="#9c9c9c" stroke="#828282" stroke-width="1"/><rect x="4.300" y="17.200" width="13.800" height="5.600" fill="#9c9c9c" stroke="#828282" stroke-width="1"/><rect x="13" y="-0.5" width="10.200" height="10.200" rx="0.800" fill="#8e8e8e"/><path d="M18.1 0.7v7.800M14.2 4.6h7.800M15.3 1.7999999999999998l5.600 5.600M20.9 1.7999999999999998l-5.600 5.600" stroke="#e8e8e8" stroke-width="1.100"/><circle cx="18.1" cy="4.6" r="2.700" fill="#f8f8f8"/><circle cx="18.1" cy="4.6" r="0.900" fill="#909090"/></svg>
<svg style="left:432px;top:48px" width="24" height="24" viewBox="0 0 24 24"><rect x="1.200" y="4.700" width="19.500" height="6" fill="#9c9c9c" stroke="#828282" stroke-width="1"/><rect x="4.300" y="11.300" width="13.800" height="5.700" fill="#9c9c9c" stroke="#828282" stroke-width="1"/><rect x="4.500" y="17.300" width="13.500" height="5.500" fill="#f4f4f4" stroke="#868686" stroke-width="1.500"/><path d="M6.500 20.200h5M9 19v2.400" stroke="#8c8c8c" stroke-width="1.100"/><rect x="13" y="-0.5" width="10.200" height="10.200" rx="0.800" fill="#8e8e8e"/><path d="M18.1 0.7v7.800M14.2 4.6h7.800M15.3 1.7999999999999998l5.600 5.600M20.9 1.7999999999999998l-5.600 5.600" stroke="#e8e8e8" stroke-width="1.100"/><circle cx="18.1" cy="4.6" r="2.700" fill="#f8f8f8"/><circle cx="18.1" cy="4.6" r="0.900" fill="#909090"/></svg>
<svg style="left:465.8px;top:48px" width="24" height="24" viewBox="0 0 24 24"><path d="M3.500 3h14q3 0 3 3v8q0 3-3 3h-3.500l-4.500 4.800l-1-4.800h-5q-3 0-3-3v-8q0-3 3-3z" fill="#f2f2f2" stroke="#9c9c9c" stroke-width="1.500"/><rect x="13" y="-0.5" width="10.200" height="10.200" rx="0.800" fill="#8e8e8e"/><path d="M18.1 0.7v7.800M14.2 4.6h7.800M15.3 1.7999999999999998l5.600 5.600M20.9 1.7999999999999998l-5.600 5.600" stroke="#e8e8e8" stroke-width="1.100"/><circle cx="18.1" cy="4.6" r="2.700" fill="#f8f8f8"/><circle cx="18.1" cy="4.6" r="0.900" fill="#909090"/></svg>
<svg style="left:509px;top:48px" width="24" height="24" viewBox="0 0 24 24"><rect x="8.300" y="4.300" width="8.500" height="3.200" fill="#9a9a9a" stroke="#7c7c7c" stroke-width="0.900"/><rect x="3.300" y="7.500" width="8.200" height="3.200" fill="#9a9a9a" stroke="#7c7c7c" stroke-width="0.900"/><rect x="11.500" y="7.500" width="8.200" height="3.200" fill="#9a9a9a" stroke="#7c7c7c" stroke-width="0.900"/><path d="M0.300 10.500h20.500v3.500c-1.500 4-5.500 6.700-10 6.700s-8.500-3-10.500-7z" fill="#b4b4b4" stroke="#909090" stroke-width="0.900"/><path d="M3.500 13c4 2 10 2 13.500 -0.500" stroke="#7c7c7c" stroke-width="1.500" fill="none"/><path d="M5.500 16.500c3 2 7 2 10 0" stroke="#e0e0e0" stroke-width="1.500" fill="none"/><ellipse cx="23.100" cy="14.500" rx="1.100" ry="6.200" fill="#3c3c3c"/></svg>
<svg style="left:543px;top:48px" width="24" height="24" viewBox="0 0 24 24"><g transform="translate(-0.300,1.400)"><rect x="8" y="1.500" width="14" height="14.500" fill="#b6b6b6" stroke="#828282" stroke-width="1.400"/><path d="M11 5h3M16.500 5h3M18 7l-2 6h4z" stroke="#8c8c8c" fill="#9c9c9c"/><rect x="1.500" y="9" width="9.500" height="9.500" fill="#a8a8a8" stroke="#7c7c7c" stroke-width="1.400"/><path d="M4 11v6M6.300 11v6M8.600 11v6" stroke="#d8d8d8" stroke-width="1.200"/><rect x="16.500" y="14" width="8" height="7" fill="#b4b4b4" stroke="#828282" stroke-width="1.400"/><rect x="18" y="15.500" width="5" height="2" fill="#dedede"/></g></svg>
<svg style="left:790.5px;top:48px" width="24" height="24" viewBox="0 0 24 24"><path d="M4.500 4l13 15" stroke="#9a9a9a" stroke-width="2.400"/><path d="M17.500 4l-13 15" stroke="#a8a8a8" stroke-width="1.400"/></svg>
<svg style="left:833px;top:48px" width="24" height="24" viewBox="0 0 24 24"><rect x="5.500" y="0.800" width="11" height="17" fill="#dadada" stroke="#8c8c8c"/><rect x="6.500" y="3" width="9" height="3.500" fill="#7c7c7c"/><rect x="7" y="8" width="2" height="2" fill="#fff"/><rect x="10" y="8" width="2" height="2" fill="#fff"/><rect x="13" y="8" width="2" height="2" fill="#fff"/><rect x="7" y="11" width="2" height="2" fill="#fff"/><rect x="10" y="11" width="2" height="2" fill="#fff"/><rect x="13" y="11" width="2" height="2" fill="#fff"/><rect x="7" y="14" width="2" height="2" fill="#fff"/><rect x="10" y="14" width="2" height="2" fill="#fff"/><rect x="13" y="14" width="2" height="2" fill="#fff"/><ellipse cx="4.5" cy="20.5" rx="4.300" ry="2" fill="#e0e0e0" stroke="#7c7c7c" stroke-width="1.300"/><ellipse cx="4.5" cy="17" rx="4.300" ry="2" fill="#e0e0e0" stroke="#7c7c7c" stroke-width="1.300"/><ellipse cx="4.5" cy="13.5" rx="4.300" ry="2" fill="#e0e0e0" stroke="#7c7c7c" stroke-width="1.300"/><ellipse cx="19" cy="20.5" rx="4.300" ry="2" fill="#e0e0e0" stroke="#7c7c7c" stroke-width="1.300"/><ellipse cx="19" cy="17" rx="4.300" ry="2" fill="#e0e0e0" stroke="#7c7c7c" stroke-width="1.300"/><ellipse cx="19" cy="13.5" rx="4.300" ry="2" fill="#e0e0e0" stroke="#7c7c7c" stroke-width="1.300"/><ellipse cx="19" cy="10.5" rx="4.300" ry="2" fill="#e0e0e0" stroke="#7c7c7c" stroke-width="1.300"/></svg>
<svg style="left:868px;top:48px" width="24" height="24" viewBox="0 0 24 24"><path d="M6 2.500h12.500v20.500h-16.500v-16.500z" fill="#f0f0f0" stroke="#9a9a9a" stroke-width="1.400"/><rect x="11.500" y="0.700" width="10" height="10" fill="#f6f6f6" stroke="#a8a8a8" stroke-width="1.300"/><path d="M14 4h3M14 6.500h3" stroke="#c0c0c0"/><path d="M5 11v8M1 15h8" stroke="#4c4c4c" stroke-width="2.800"/><path d="M10 19h7" stroke="#8c8c8c" stroke-width="2.600"/></svg>
<svg style="left:902px;top:48px" width="24" height="24" viewBox="0 0 24 24"><path d="M11.500 1.500v10M6.500 6.500h10" stroke="#505050" stroke-width="4.200" stroke-linejoin="round"/><rect x="6.500" y="15.800" width="10.500" height="4.300" rx="1.500" fill="#9a9a9a"/></svg>
<svg style="left:945px;top:48px" width="24" height="24" viewBox="0 0 24 24"><path d="M6.500 0.500l1.500 0l7.500 15.500h-2.500z" fill="#ececec" stroke="#a4a4a4" stroke-width="0.900"/><path d="M17.500 0.500l-1.500 0l-7.500 15.500h2.500z" fill="#ececec" stroke="#a4a4a4" stroke-width="0.900"/><ellipse cx="6.800" cy="19.300" rx="3" ry="3.200" fill="none" stroke="#8c8c8c" stroke-width="1.700"/><ellipse cx="17.200" cy="19.300" rx="3" ry="3.200" fill="none" stroke="#8c8c8c" stroke-width="1.700"/></svg>
<svg style="left:980px;top:48px" width="24" height="24" viewBox="0 0 24 24"><path d="M0.700 1.700h9.500l3 3v11h-12.500z" fill="#f2f2f2" stroke="#a4a4a4" stroke-width="1.300"/><path d="M3.500 8h6M3.500 11h4" stroke="#b4b4b4" stroke-width="1.300"/><path d="M8.500 5.500h11.500l3.500 3.500v12.500h-15z" fill="#f4f4f4" stroke="#a4a4a4" stroke-width="1.300"/><path d="M11.500 12h9M11.500 15h9M11.500 18h9" stroke="#b0b0b0" stroke-width="1.400"/></svg>
<svg style="left:1015px;top:48px" width="24" height="24" viewBox="0 0 24 24"><rect x="0.500" y="2.500" width="23" height="18" rx="2" fill="#a8a8a8" stroke="#989898"/><rect x="7.500" y="0.500" width="9" height="3.500" rx="1.500" fill="#d0d0d0" stroke="#989898"/><path d="M5.500 8.500h9.500l3.500 3v12h-13z" fill="#e6e6e6" stroke="#8c8c8c" stroke-width="1.300"/><path d="M8 14.500h8M8 17.500h8M8 20.500h8" stroke="#9c9c9c" stroke-width="1.400"/></svg>
<svg style="left:1235px;top:48px" width="24" height="24" viewBox="0 0 24 24"><path d="M0.700 2h10l3 3v12.500h-13z" fill="#f0f0f0" stroke="#b0b0b0" stroke-width="1.300"/><path d="M9.700 5.500h10.500l3 3v13h-13.500z" fill="#f2f2f2" stroke="#b0b0b0" stroke-width="1.300"/></svg>
<svg style="left:1270px;top:48px" width="24" height="24" viewBox="0 0 24 24"><defs><linearGradient id="py" x1="0" y1="0" x2="0" y2="1"><stop offset="0" stop-color="#ffc84a"/><stop offset="1" stop-color="#f7a008"/></linearGradient></defs><rect x="0.700" y="3" width="22.600" height="17.500" rx="2" fill="url(#py)" stroke="#e79a10"/><rect x="7.500" y="0.700" width="9.500" height="4" rx="1.500" fill="#ffe08a" stroke="#e0a020"/><path d="M8 8.500h10.500v15h-13v-12z" fill="#c6eef0" stroke="#4aa4ac" stroke-width="1.400"/><path d="M8 8.500v3h-2.500" fill="none" stroke="#4aa4ac" stroke-width="1.200"/></svg>
<svg style="left:1358px;top:48px" width="24" height="24" viewBox="0 0 24 24"><path d="M1 14.500l8.500-12l13.500 5.500l-8.500 12z" fill="#6c6c6c"/><path d="M1 14.500l13.500 5.500l8.500-12v3l-8.500 12l-13.500-5.500z" fill="#d4d4d4" stroke="#a0a0a0" stroke-width="0.800"/><path d="M9 4.500l3 1.200" stroke="#c8c8c8" stroke-width="1.600"/><rect x="13.5" y="0.5" width="10.200" height="10.200" rx="0.800" fill="#8e8e8e"/><path d="M18.6 1.7v7.800M14.7 5.6h7.800M15.8 2.8l5.600 5.600M21.4 2.8l-5.600 5.600" stroke="#e8e8e8" stroke-width="1.100"/><circle cx="18.6" cy="5.6" r="2.700" fill="#f8f8f8"/><circle cx="18.6" cy="5.6" r="0.900" fill="#909090"/></svg>
<svg style="left:1393px;top:48px" width="24" height="24" viewBox="0 0 24 24"><rect x="1.500" y="2.300" width="21.500" height="19.500" fill="#fff" stroke="#adadad" stroke-width="1.600"/><rect x="0" y="-0.5" width="10.200" height="10.200" rx="0.800" fill="#8e8e8e"/><path d="M5.1 0.7v7.800M1.2 4.6h7.800M2.3 1.7999999999999998l5.600 5.600M7.9 1.7999999999999998l-5.600 5.600" stroke="#e8e8e8" stroke-width="1.100"/><circle cx="5.1" cy="4.6" r="2.700" fill="#f8f8f8"/><circle cx="5.1" cy="4.6" r="0.900" fill="#909090"/><text x="13.6" y="19" font-size="11" fill="#1a1a1a" text-anchor="middle" font-family="Liberation Sans,sans-serif" >Р</text></svg>
<svg style="left:1427px;top:48px" width="24" height="24" viewBox="0 0 24 24"><rect x="1.500" y="2.300" width="21.500" height="19.500" fill="#fff" stroke="#adadad" stroke-width="1.600"/><rect x="0" y="-0.5" width="10.200" height="10.200" rx="0.800" fill="#8e8e8e"/><path d="M5.1 0.7v7.800M1.2 4.6h7.800M2.3 1.7999999999999998l5.600 5.600M7.9 1.7999999999999998l-5.600 5.600" stroke="#e8e8e8" stroke-width="1.100"/><circle cx="5.1" cy="4.6" r="2.700" fill="#f8f8f8"/><circle cx="5.1" cy="4.6" r="0.900" fill="#909090"/><text x="13.2" y="19" font-size="11" fill="#1a1a1a" text-anchor="middle" font-family="Liberation Sans,sans-serif" textLength="16.500" lengthAdjust="spacingAndGlyphs">ПР</text></svg>
<svg style="left:1471px;top:48px" width="24" height="24" viewBox="0 0 24 24"><rect x="0.700" y="2.200" width="11" height="2.800" fill="#d6d6d6" stroke="#8c8c8c"/><path d="M6 5v16.500M6 10h3.500M6 15.700h3.500M6 21.500h3.500" stroke="#8c8c8c" fill="none" stroke-width="1.300"/><rect x="9.500" y="8.500" width="9" height="2.800" fill="#d6d6d6" stroke="#8c8c8c"/><rect x="9.500" y="14.200" width="9" height="2.800" fill="#d6d6d6" stroke="#8c8c8c"/><rect x="9.500" y="20" width="9" height="2.800" fill="#d6d6d6" stroke="#8c8c8c"/><path d="M12 10.500l1-3l8-7.500l2 2l-8 7.500z" fill="#c4c4c4" stroke="#8c8c8c" stroke-width="0.900"/></svg>
<svg style="left:1505.5px;top:48px" width="24" height="24" viewBox="0 0 24 24"><rect x="0.700" y="2.200" width="11" height="2.800" fill="#d6d6d6" stroke="#8c8c8c"/><path d="M6 5v16.500M6 10h3.500M6 15.700h3.500M6 21.500h3.500" stroke="#8c8c8c" fill="none" stroke-width="1.300"/><rect x="9.500" y="8.500" width="9" height="2.800" fill="#d6d6d6" stroke="#8c8c8c"/><rect x="9.500" y="14.200" width="9" height="2.800" fill="#d6d6d6" stroke="#8c8c8c"/><rect x="9.500" y="20" width="9" height="2.800" fill="#d6d6d6" stroke="#8c8c8c"/><path d="M17.500 3l5.500 6M23 3l-5.500 6" stroke="#9a9a9a" stroke-width="1.300"/></svg>
<svg style="left:1559px;top:48px" width="24" height="24" viewBox="0 0 24 24"><path d="M9.500 7h14.500" stroke="#6a7698" stroke-width="1.500"/><path d="M5 12h19M5 17h19M5 21.500h19" stroke="#6a7698" stroke-width="1.500"/><path d="M0 6h4.500v-3l5 4.500l-5 4.500v-3h-4.500z" fill="#1434e4"/></svg>
<svg style="left:1593.7px;top:48px" width="24" height="24" viewBox="0 0 24 24"><path d="M9.500 7h14.500" stroke="#6a7698" stroke-width="1.500"/><path d="M5 12h19M5 17h19M5 21.500h19" stroke="#6a7698" stroke-width="1.500"/><path d="M4.800 2.500l4.700 5h-3v5h-3.400v-5h-3z" fill="#1434e4"/></svg>
<svg style="left:1628px;top:48px" width="24" height="24" viewBox="0 0 24 24"><path d="M5 7h19M5 12h19M5 17h19" stroke="#6a7698" stroke-width="1.500"/><path d="M9.500 21.500h14.500" stroke="#6a7698" stroke-width="1.500"/><path d="M4.800 24l4.700-5h-3v-5h-3.400v5h-3z" fill="#1434e4"/></svg>
<svg style="left:1662.6px;top:48px" width="24" height="24" viewBox="0 0 24 24"><path d="M5 7h19M5 12h19M5 17h19" stroke="#6a7698" stroke-width="1.500"/><path d="M9.500 21.500h14.500" stroke="#6a7698" stroke-width="1.500"/><path d="M0 18.500h4.500v-3l5 4.500l-5 4.500v-3h-4.500z" fill="#1434e4"/></svg>
<svg style="left:1717.5px;top:48px" width="24" height="24" viewBox="0 0 24 24"><path d="M12.800 1.800c7 1 11.500 7 9 12.500c-2.500 5-10 7-16.500 4.500" fill="none" stroke="#a9c0c6" stroke-width="2"/><path d="M12.800 1.300c7.500 1 12.500 7 9.800 13" fill="none" stroke="#7f9ca4" stroke-width="0.800"/><path d="M1.500 19.500l4.500-4" stroke="#c8782a" stroke-width="2.800" stroke-linecap="round"/><path d="M9.500 7.500l11.500 11.500" stroke="#c8782a" stroke-width="2.500" stroke-linecap="round"/><path d="M18 16l3 3" stroke="#8a5a2a" stroke-width="2.500" stroke-linecap="round"/><path d="M3.500 7l5.500-4.500l3 3.500l-5.500 4.500z" fill="#5a6468"/><path d="M4.500 6.500l4.500-3.500" stroke="#8c9aa0" stroke-width="1"/></svg>
<svg style="left:1751.5px;top:48px" width="24" height="24" viewBox="0 0 24 24"><path d="M0.500 20.200h23" stroke="#a8a8a8" stroke-width="2"/><path d="M0.300 9.700h12.200l1-2.300h3v8.300h-16.200z" fill="#2a7ae6" stroke="#1c5cc0" stroke-width="0.700"/><path d="M1 10.500h11" stroke="#6aa8f4" stroke-width="1"/><path d="M16.500 8.500h4l3 3.500v4h-7z" fill="#f2a020" stroke="#b8740c" stroke-width="0.700"/><path d="M17.500 9.700h2.300l1.700 2.300h-4z" fill="#d8f0f4"/><rect x="0.300" y="15.300" width="23.200" height="1.500" fill="#4a4a4a"/><circle cx="5" cy="16.800" r="2.500" fill="#181818"/><circle cx="5" cy="16.800" r="1" fill="#d8d070"/><circle cx="20" cy="16.800" r="2.500" fill="#181818"/><circle cx="20" cy="16.800" r="1" fill="#d8d070"/></svg>
<svg style="left:1786px;top:48px" width="24" height="24" viewBox="0 0 24 24"><rect x="8.3" y="7.1" width="7.400" height="3.200" rx="1.200" fill="#f47a14" stroke="#cc5a08" stroke-width="0.800"/><path d="M9.6 8.0h4" stroke="#ffb468" stroke-width="0.900"/><rect x="4.3" y="10.600000000000001" width="7.400" height="3.200" rx="1.200" fill="#f47a14" stroke="#cc5a08" stroke-width="0.800"/><path d="M5.6 11.5h4" stroke="#ffb468" stroke-width="0.900"/><rect x="12.3" y="10.600000000000001" width="7.400" height="3.200" rx="1.200" fill="#f47a14" stroke="#cc5a08" stroke-width="0.800"/><path d="M13.6 11.5h4" stroke="#ffb468" stroke-width="0.900"/><rect x="0.5" y="14.100000000000001" width="7.400" height="3.200" rx="1.200" fill="#f47a14" stroke="#cc5a08" stroke-width="0.800"/><path d="M1.8 15.0h4" stroke="#ffb468" stroke-width="0.900"/><rect x="8.4" y="14.100000000000001" width="7.400" height="3.200" rx="1.200" fill="#f47a14" stroke="#cc5a08" stroke-width="0.800"/><path d="M9.7 15.0h4" stroke="#ffb468" stroke-width="0.900"/><rect x="16.3" y="14.100000000000001" width="7.400" height="3.200" rx="1.200" fill="#f47a14" stroke="#cc5a08" stroke-width="0.800"/><path d="M17.6 15.0h4" stroke="#ffb468" stroke-width="0.900"/></svg>
<svg style="left:1829.5px;top:48px" width="24" height="24" viewBox="0 0 24 24"><path d="M0.500 20.200h23" stroke="#a8a8a8" stroke-width="2"/><path d="M0.300 9.700h12.200l1-2.300h3v8.300h-16.200z" fill="#2a7ae6" stroke="#1c5cc0" stroke-width="0.700"/><path d="M1 10.500h11" stroke="#6aa8f4" stroke-width="1"/><path d="M16.500 8.500h4l3 3.500v4h-7z" fill="#f2a020" stroke="#b8740c" stroke-width="0.700"/><path d="M17.500 9.700h2.300l1.700 2.300h-4z" fill="#d8f0f4"/><rect x="0.300" y="15.300" width="23.200" height="1.500" fill="#4a4a4a"/><circle cx="5" cy="16.800" r="2.500" fill="#181818"/><circle cx="5" cy="16.800" r="1" fill="#d8d070"/><circle cx="20" cy="16.800" r="2.500" fill="#181818"/><circle cx="20" cy="16.800" r="1" fill="#d8d070"/><path d="M2 9.700c1-3 3.500-4.700 6.500-4.700s4.500 1.700 5 4.700z" fill="#f07814" stroke="#a84c08" stroke-width="0.700"/><path d="M5 7.700h3M7.500 6.300h3" stroke="#a84c08" stroke-width="0.900"/></svg>
<svg style="left:1883.5px;top:48px" width="24" height="24" viewBox="0 0 24 24"><g transform="translate(0,1.800) scale(1,0.860)"><path d="M0.500 15.500l13.500-4.500l9.500 3.500l-13.500 5z" fill="#f05868"/><path d="M0.500 15.500v4l9.500 4l13.500-5v-4l-13.500 5z" fill="#fff" stroke="#f05868" stroke-width="1.100"/><path d="M1 17.500l9 3.800l13-4.800" stroke="#c8c8d0" stroke-width="0.700" fill="none"/><path d="M3 8l12-4.500l8 3l-12 4.500z" fill="#e8509c"/><path d="M3 8v4.500l8 3l12-4.500v-4.500l-12 4.500z" fill="#fff" stroke="#e86c9c" stroke-width="1.100"/><path d="M3.500 10.300l7.500 2.900l11.500-4.300" stroke="#c8c8d0" stroke-width="0.700" fill="none"/><path d="M3 8l8 3v4.500l-8-3z" fill="#e8509c" opacity="0.800"/></g></svg>
<svg style="left:1918px;top:48px" width="24" height="24" viewBox="0 0 24 24"><g transform="translate(0,1.800) scale(1,0.860)"><path d="M0.500 15.500l13.500-4.500l9.500 3.500l-13.500 5z" fill="#58a8f4"/><path d="M0.500 15.500v4l9.500 4l13.500-5v-4l-13.500 5z" fill="#fff" stroke="#58a8f4" stroke-width="1.100"/><path d="M1 17.500l9 3.800l13-4.800" stroke="#c8c8d0" stroke-width="0.700" fill="none"/><path d="M3 8l12-4.500l8 3l-12 4.500z" fill="#2444c4"/><path d="M3 8v4.500l8 3l12-4.500v-4.500l-12 4.500z" fill="#fff" stroke="#4c7ce0" stroke-width="1.100"/><path d="M3.500 10.300l7.500 2.900l11.500-4.300" stroke="#c8c8d0" stroke-width="0.700" fill="none"/><path d="M3 8l8 3v4.500l-8-3z" fill="#2444c4" opacity="0.800"/></g></svg>
<svg style="left:4px;top:124px" width="24" height="24" viewBox="0 0 24 24"><defs><linearGradient id="fg" x1="0" y1="0" x2="0" y2="1"><stop offset="0" stop-color="#f6f6f6"/><stop offset="1" stop-color="#dadada"/></linearGradient></defs><path d="M0.800 1.500h8.500l2 2.500h11.700v17.500h-22.200z" fill="url(#fg)" stroke="#9c9c9c" stroke-width="1.500"/><path d="M1 12.500h22" stroke="#e8e8e8"/><rect x="14" y="0" width="9.500" height="9.500" fill="#e6e6e6"/><circle cx="18.700" cy="4.700" r="2.300" fill="#fff"/><path d="M18.700 1v7.400M15 4.700h7.400" stroke="#fff" stroke-width="0.900"/></svg>
<svg style="left:38px;top:124px" width="24" height="24" viewBox="0 0 24 24"><path d="M5 1.500h12.500v21.500h-16v-17.500z" fill="#f4f4f4" stroke="#9c9c9c" stroke-width="1.500"/><path d="M5 1.500v4h-3.500" fill="none" stroke="#9c9c9c" stroke-width="1.200"/><path d="M4.500 9.500h10M4.500 12.500h10M4.500 15.500h10M4.500 18.500h10" stroke="#8c8c8c" stroke-width="1.500"/><path d="M17.500 0.500v10M12.500 5.500h10M14 2l7 7M21 2l-7 7" stroke="#dadada" stroke-width="1.200"/><circle cx="17.500" cy="5.500" r="2" fill="#ececec"/></svg>
<svg style="left:72.5px;top:124px" width="24" height="24" viewBox="0 0 24 24"><path d="M2 4l20 17" stroke="#c4c4c4" stroke-width="1.300"/><path d="M3.500 20.500l8-8" stroke="#c0c0c0" stroke-width="3" stroke-linecap="round"/><path d="M16 8l5-4.500" stroke="#c4c4c4" stroke-width="1.400"/><path d="M2.500 4l7 6" stroke="#c0c0c0" stroke-width="2.600" stroke-linecap="round"/></svg>
<svg style="left:116px;top:124px" width="24" height="24" viewBox="0 0 24 24"><defs><linearGradient id="fy" x1="0" y1="0" x2="1" y2="1"><stop offset="0" stop-color="#ffe000"/><stop offset="1" stop-color="#ff9000"/></linearGradient><linearGradient id="fb" x1="0" y1="0" x2="0" y2="1"><stop offset="0" stop-color="#bcd8fc"/><stop offset="1" stop-color="#6ea4ec"/></linearGradient></defs><path d="M10 0.800h13v16h-15v-14z" fill="url(#fb)" stroke="#787878" stroke-width="1.200"/><path d="M10 0.800v2.500h-2" fill="#fff" stroke="#787878"/><rect x="4" y="4.500" width="3.500" height="5" fill="#ffb400" stroke="#a07818" stroke-width="0.800"/><path d="M0.700 9h20.500l-1.500 14h-17.200z" fill="url(#fy)" stroke="#8a7430" stroke-width="1.200"/><path d="M12 16h6v-3.500l6 5.500l-6 5.500v-3.500h-6z" fill="#1070e8"/></svg>
<svg style="left:151px;top:124px" width="24" height="24" viewBox="0 0 24 24"><defs><linearGradient id="fy2" x1="0" y1="0" x2="1" y2="1"><stop offset="0" stop-color="#ffe800"/><stop offset="1" stop-color="#ff8c00"/></linearGradient></defs><path d="M4.500 3.500h6v4h-6z" fill="#f4ec20" stroke="#a09028" stroke-width="0.800"/><path d="M17 6h6v6h-6z" fill="#f8f0b0" stroke="#b0a060" stroke-width="0.800"/><path d="M0.800 8.500h21l1.500 3l-1.500 4l1.500 6h-20.500l-1-7z" fill="url(#fy2)" stroke="#8a7430" stroke-width="1.100"/><path d="M11.500 0v8h-4l5.700 6l5.700-6h-4v-8z" fill="#0a70e0"/></svg>
<svg style="left:193px;top:124px" width="24" height="24" viewBox="0 0 24 24"><path d="M5.500 1h13.500v22h-16.500v-19z" fill="#fff" stroke="#787878" stroke-width="1.400"/><path d="M5.500 1v3h-3" fill="none" stroke="#787878"/><text x="11.500" y="20" font-size="18" font-weight="bold" fill="#1f8c3c" text-anchor="middle" font-family="Liberation Sans,sans-serif">?</text></svg>
<svg style="left:458.5px;top:124px" width="24" height="24" viewBox="0 0 24 24"><path d="M7.500 4v17.500M7.500 9.500h4M7.500 15.500h4" stroke="#20242c" stroke-width="1.500" fill="none"/><rect x="2.5" y="1.8" width="10" height="4" rx="0.800" fill="#23262c"/><rect x="4.0" y="3.0" width="7" height="1.400" fill="#9cc8fc"/><rect x="11" y="7.5" width="10" height="4" rx="0.800" fill="#23262c"/><rect x="12.5" y="8.7" width="7" height="1.400" fill="#9cc8fc"/><rect x="11" y="13.5" width="10" height="4" rx="0.800" fill="#23262c"/><rect x="12.5" y="14.7" width="7" height="1.400" fill="#9cc8fc"/><rect x="2.5" y="19.8" width="10" height="4" rx="0.800" fill="#23262c"/><rect x="4.0" y="21.0" width="7" height="1.400" fill="#9cc8fc"/></svg>
<svg style="left:494px;top:124px" width="24" height="24" viewBox="0 0 24 24"><g transform="translate(0,2.500)"><rect x="5.200" y="0.700" width="3.300" height="7" fill="#e8981c" stroke="#b06810" stroke-width="0.800"/><rect x="16" y="4.500" width="3" height="4" fill="#e8981c" stroke="#b06810" stroke-width="0.800"/><path d="M3.500 12.500l8.500-8.500l8.500 8.500v10h-17z" fill="#fff" stroke="#c0c0c0" stroke-width="1"/><path d="M0.500 13.500l11.500-11l11.500 11" fill="none" stroke="#c87424" stroke-width="1.500"/><rect x="7" y="13.500" width="3.600" height="9" fill="#f4a81c" stroke="#c07c10" stroke-width="0.800"/><rect x="14" y="12.500" width="4.500" height="4.500" fill="#3c7cf4" stroke="#9cc0fc" stroke-width="0.800"/><path d="M2 22.500h20" stroke="#909090" stroke-width="1.200"/></g></svg>
<svg style="left:536px;top:124px" width="24" height="24" viewBox="0 0 24 24"><defs><linearGradient id="fg" x1="0" y1="0" x2="0" y2="1"><stop offset="0" stop-color="#f6f6f6"/><stop offset="1" stop-color="#dadada"/></linearGradient></defs><path d="M0.800 1.500h8.500l2 2.500h11.700v17.500h-22.200z" fill="url(#fg)" stroke="#9c9c9c" stroke-width="1.500"/><path d="M1 12.500h22" stroke="#e8e8e8"/><rect x="14" y="0" width="9.500" height="9.500" fill="#e6e6e6"/><circle cx="18.700" cy="4.700" r="2.300" fill="#fff"/><path d="M18.700 1v7.400M15 4.700h7.400" stroke="#fff" stroke-width="0.900"/></svg>
<svg style="left:571px;top:124px" width="24" height="24" viewBox="0 0 24 24"><path d="M5 1.500h12.500v21.500h-16v-17.500z" fill="#f4f4f4" stroke="#9c9c9c" stroke-width="1.500"/><path d="M5 1.500v4h-3.500" fill="none" stroke="#9c9c9c" stroke-width="1.200"/><path d="M4.500 9.500h10M4.500 12.500h10M4.500 15.500h10M4.500 18.500h10" stroke="#8c8c8c" stroke-width="1.500"/><path d="M17.500 0.500v10M12.500 5.500h10M14 2l7 7M21 2l-7 7" stroke="#dadada" stroke-width="1.200"/><circle cx="17.500" cy="5.500" r="2" fill="#ececec"/></svg>
<svg style="left:605px;top:124px" width="24" height="24" viewBox="0 0 24 24"><path d="M2 4l20 17" stroke="#c4c4c4" stroke-width="1.300"/><path d="M3.500 20.500l8-8" stroke="#c0c0c0" stroke-width="3" stroke-linecap="round"/><path d="M16 8l5-4.500" stroke="#c4c4c4" stroke-width="1.400"/><path d="M2.500 4l7 6" stroke="#c0c0c0" stroke-width="2.600" stroke-linecap="round"/></svg>
<svg style="left:649px;top:124px" width="24" height="24" viewBox="0 0 24 24"><rect x="1" y="1" width="18" height="16" rx="1" fill="#f6f6f6" stroke="#9c9c9c" stroke-width="1.800"/><rect x="7.500" y="7.500" width="16" height="15.500" fill="#ececec" stroke="#9c9c9c" stroke-width="1.500"/><rect x="9.500" y="10.500" width="3.500" height="3.500" fill="none" stroke="#8c8c8c" stroke-width="1.200"/><rect x="17.500" y="17" width="3.500" height="3.500" fill="none" stroke="#8c8c8c" stroke-width="1.200"/><path d="M17.500 9.500l-3 12" stroke="#8c8c8c" stroke-width="1.300"/></svg>
<svg style="left:684px;top:124px" width="24" height="24" viewBox="0 0 24 24"><path d="M4.500 0.800h13v22h-16.500v-18.500z" fill="#f4f4f4" stroke="#8c8c8c" stroke-width="1.500"/><path d="M4.500 0.800v3.700h-3.500" fill="none" stroke="#8c8c8c" stroke-width="1.100"/><path d="M4 8h10.500M4 11h10.500M4 14h10.500M4 17h10.500M4 20h10.500" stroke="#8c8c8c" stroke-width="1.500"/></svg>
<svg style="left:717px;top:124px" width="24" height="24" viewBox="0 0 24 24"><defs><linearGradient id="dfg" x1="0" y1="0" x2="1" y2="1"><stop offset="0" stop-color="#f8f8f8"/><stop offset="1" stop-color="#d8d8d8"/></linearGradient></defs><path d="M8.500 0.800h13.500v21.500h-18v-17z" fill="url(#dfg)" stroke="#9c9c9c" stroke-width="1.500"/><path d="M8.500 0.800v4.500h-4.500" fill="none" stroke="#9c9c9c" stroke-width="1.100"/><rect x="0.500" y="10.500" width="12.500" height="3.800" fill="#ececec" stroke="#a8a8a8" stroke-width="1.200"/></svg>
<svg style="left:752px;top:124px" width="24" height="24" viewBox="0 0 24 24"><path d="M0.800 2h8.500l2 2.500h11.700v17.500h-22.200z" fill="#dcdcdc" stroke="#9c9c9c" stroke-width="1.500"/></svg>
<svg style="left:787px;top:124px" width="24" height="24" viewBox="0 0 24 24"><path d="M0.800 2h8.500l2 2.500h11.700v17.500h-22.200z" fill="#dcdcdc" stroke="#9c9c9c" stroke-width="1.500"/><path d="M1 6.500h22" stroke="#b8b8b8"/><rect x="7" y="8" width="11.500" height="12" fill="#f8f8f8" stroke="#a8a8a8"/><path d="M16 10.500h-6l3.500 3.500l-3.500 4h6" fill="none" stroke="#6c6c6c" stroke-width="1.400"/></svg>
<svg style="left:830px;top:124px" width="24" height="24" viewBox="0 0 24 24"><rect x="5.500" y="1.500" width="14" height="20.500" rx="1.500" fill="#d8d8d8" stroke="#8c8c8c" stroke-width="1.300"/><rect x="6.500" y="4" width="12" height="2" fill="#8c8c8c"/><rect x="6.500" y="6" width="12" height="2.500" fill="#b4b4b4"/><rect x="7.2" y="10" width="1.900" height="1.900" fill="#fff"/><rect x="10.2" y="10" width="1.900" height="1.900" fill="#fff"/><rect x="13.2" y="10" width="1.900" height="1.900" fill="#fff"/><rect x="16.2" y="10" width="1.900" height="1.900" fill="#fff"/><rect x="7.2" y="13" width="1.900" height="1.900" fill="#fff"/><rect x="10.2" y="13" width="1.900" height="1.900" fill="#fff"/><rect x="13.2" y="13" width="1.900" height="1.900" fill="#fff"/><rect x="16.2" y="13" width="1.900" height="1.900" fill="#fff"/><rect x="7.2" y="16" width="1.900" height="1.900" fill="#fff"/><rect x="10.2" y="16" width="1.900" height="1.900" fill="#fff"/><rect x="13.2" y="16" width="1.900" height="1.900" fill="#fff"/><rect x="16.2" y="16" width="1.900" height="1.900" fill="#fff"/><rect x="7.2" y="19" width="1.900" height="1.900" fill="#fff"/><rect x="10.2" y="19" width="1.900" height="1.900" fill="#fff"/><rect x="13.2" y="19" width="1.900" height="1.900" fill="#fff"/><rect x="16.2" y="19" width="1.900" height="1.900" fill="#fff"/></svg>
<svg style="left:873.5px;top:124px" width="24" height="24" viewBox="0 0 24 24"><path d="M1 10l13-7.500l9 4.500l-13 8.500z" fill="#e8e8e8" stroke="#d0d0d0"/><path d="M1 10v4.500l9 5.500l13-9v-4l-13 8.500z" fill="#d4d4d4" stroke="#c4c4c4" stroke-width="0.800"/></svg>
<svg style="left:908px;top:124px" width="24" height="24" viewBox="0 0 24 24"><path d="M1 13l11-7l8 3.500l-11 8z" fill="#e8e8e8" stroke="#d0d0d0"/><path d="M1 13v3l8 4.500l11-8v-3l-11 8z" fill="#c8c8c8" stroke="#bcbcbc" stroke-width="0.800"/><rect x="13" y="11.500" width="10.500" height="11.500" fill="#f4f4f4" stroke="#9c9c9c" stroke-width="1.400"/><path d="M16.500 21v-7h4.500M16.500 17.500h3.500" fill="none" stroke="#8c8c8c" stroke-width="1.500"/></svg>
<svg style="left:943px;top:124px" width="24" height="24" viewBox="0 0 24 24"><rect x="1.500" y="1.500" width="20" height="20" fill="#eef4ee" stroke="#3f803f" stroke-width="2"/><rect x="3" y="3" width="17" height="17" fill="none" stroke="#cfe2cf" stroke-width="1"/><path d="M5 6.500h4.300l9 10.500h-4.300z" fill="#2e8c2e"/><path d="M18.300 6.500h-4.300l-9 10.500h4.300z" fill="#54b054"/></svg>
<svg style="left:977.5px;top:124px" width="24" height="24" viewBox="0 0 24 24"><path d="M6.500 0.500h13l4 4v18.500h-17z" fill="#fff" stroke="#dcdcdc"/><rect x="0" y="2.500" width="21.500" height="9.300" fill="#ee1010"/><text x="10.800" y="10.300" font-size="8.600" font-weight="bold" fill="#fff" text-anchor="middle" font-family="Liberation Sans,sans-serif" textLength="17" lengthAdjust="spacingAndGlyphs">PDF</text><path d="M6.500 23c2.500-5 5.500-7.500 9-8.500c-2 2.500-3.500 5.500-4.500 8.500zM12.500 23c1.500-4.500 4.500-8 9.500-9.500c-3.500 3-5 6-5.500 9.500z" fill="#e01818"/><path d="M18.500 23c0.500-3 2-5.500 4.500-7v2c-1.200 1.500-2 3-2.200 5z" fill="#e01818"/></svg>
<svg style="left:1012px;top:124px" width="24" height="24" viewBox="0 0 24 24"><path d="M8.500 0.500h14.500v6h-14.500z" fill="#fff" stroke="#c4c4c4"/><ellipse cx="2.600" cy="7" rx="2.600" ry="3.700" fill="#00e27e"/><rect x="4" y="3" width="20" height="9.800" rx="1" fill="#1068ec"/><text x="14.200" y="11" font-size="9" font-weight="bold" fill="#fff" text-anchor="middle" font-family="Liberation Sans,sans-serif" textLength="18" lengthAdjust="spacingAndGlyphs">XML</text><rect x="2.300" y="13.200" width="21" height="8.800" fill="#f2e2f2" stroke="#8c8c8c"/><text x="12.800" y="21" font-size="9.500" font-weight="bold" fill="#000" text-anchor="middle" font-family="Liberation Sans,sans-serif" textLength="17" lengthAdjust="spacingAndGlyphs">ГГЭ</text></svg>
<svg style="left:1047px;top:124px" width="24" height="24" viewBox="0 0 24 24"><path d="M8.500 0.500h14.500v6h-14.500z" fill="#dcdcdc" stroke="#8c8c8c"/><ellipse cx="2.600" cy="7" rx="2.600" ry="3.700" fill="#909090"/><rect x="4" y="3" width="20" height="9.800" rx="1" fill="#707070"/><text x="14.200" y="11" font-size="9" font-weight="bold" fill="#fff" text-anchor="middle" font-family="Liberation Sans,sans-serif" textLength="18" lengthAdjust="spacingAndGlyphs">XML</text><rect x="2.300" y="13.200" width="21" height="8.800" fill="#0c0c0c" stroke="#8c8c8c"/><text x="12.800" y="21" font-size="9.500" font-weight="bold" fill="#fff" text-anchor="middle" font-family="Liberation Sans,sans-serif" textLength="18" lengthAdjust="spacingAndGlyphs">МГЭ</text></svg>
<svg style="left:1089.5px;top:124px" width="24" height="24" viewBox="0 0 24 24"><path d="M1 11l14-8.500l8.500 4l-12.500 9z" fill="#e4e4e4" stroke="#cfcfcf"/><path d="M1 11l2 6l8.500 4l12-9.500v-5l-12.500 9z" fill="#d8d8d8" stroke="#c4c4c4" stroke-width="0.800"/></svg>
<svg style="left:1133px;top:124px" width="24" height="24" viewBox="0 0 24 24"><rect x="1" y="1" width="18" height="16" rx="1" fill="#f6f6f6" stroke="#9c9c9c" stroke-width="1.800"/><rect x="7.500" y="7.500" width="16" height="15.500" fill="#ececec" stroke="#9c9c9c" stroke-width="1.500"/><rect x="9.500" y="10.500" width="3.500" height="3.500" fill="none" stroke="#8c8c8c" stroke-width="1.200"/><rect x="17.500" y="17" width="3.500" height="3.500" fill="none" stroke="#8c8c8c" stroke-width="1.200"/><path d="M17.500 9.500l-3 12" stroke="#8c8c8c" stroke-width="1.300"/></svg>
<svg style="left:1177px;top:124px" width="24" height="24" viewBox="0 0 24 24"><path d="M11.500 4.500l7.300 8h-4.300v7h-6v-7h-4.300z" fill="#808080"/></svg>
<svg style="left:1211.5px;top:124px" width="24" height="24" viewBox="0 0 24 24"><path d="M11.500 19.500l7.300-8h-4.300v-7h-6v7h-4.300z" fill="#808080"/></svg>
<svg style="left:55.5px;top:181.5px" width="24" height="24" viewBox="0 0 24 24"><rect x="0.500" y="8.500" width="7.500" height="14.500" fill="#4a86e2"/><rect x="16" y="12" width="7" height="11" fill="#4a86e2"/><rect x="8" y="5.500" width="7.500" height="17.500" fill="#2f72dc"/><path d="M2 11.500h4.500M2 14.500h4.500M2 17.500h4.500M2 20.500h4.500M17.500 14.500h4M17.500 17.500h4M17.500 20.500h4" stroke="#a9c8f4" stroke-width="1.600"/><path d="M9.500 8h4.500M9.500 11h4.500M9.500 14h4.500M9.500 17h4.500M9.500 20h4.500" stroke="#b9d0fa" stroke-width="1.600"/><path d="M8.700 5.500v-5" stroke="#303030" stroke-width="1.200"/><path d="M9.300 0.600l6.200 2.200l-6.200 1.600z" fill="#f01010"/></svg>
<svg style="left:83px;top:205px" width="24" height="24" viewBox="0 0 24 24"><path d="M0.400 12.400v4.200l15.200 7.200l8.200-12.800v-5.200l-8.400 12z" fill="#d6d9e0" stroke="#b9bcc8" stroke-width="0.700"/><path d="M1 14.500l14.500 6.800l7.800-11.500" fill="none" stroke="#f4f4f8" stroke-width="1.300"/><path d="M9.400 0.400l14.400 5.400l-8.400 12l-15-5.400z" fill="#3fa362"/><path d="M9.400 0.400l-9 12" stroke="#2f8a4c" stroke-width="1.600"/><path d="M11 5.500l8 3" stroke="#e4f4e8" stroke-width="2.200"/></svg>
<svg style="left:83px;top:229px" width="24" height="24" viewBox="0 0 24 24"><path d="M0.400 12.400v4.200l15.200 7.200l8.200-12.800v-5.200l-8.400 12z" fill="#d6d9e0" stroke="#b9bcc8" stroke-width="0.700"/><path d="M1 14.500l14.500 6.800l7.800-11.500" fill="none" stroke="#f4f4f8" stroke-width="1.300"/><path d="M9.400 0.400l14.400 5.400l-8.400 12l-15-5.400z" fill="#3fa362"/><path d="M9.400 0.400l-9 12" stroke="#2f8a4c" stroke-width="1.600"/><path d="M11 5.500l8 3" stroke="#e4f4e8" stroke-width="2.200"/></svg>
<svg style="left:14.5px;top:1179.5px" width="24" height="24" viewBox="0 0 24 24"><path d="M1 2v20" stroke="#707070" stroke-width="1.300"/><path d="M1 4l10-1" stroke="#909090"/><path d="M8 8l5.500-6l5.500 6z" fill="#a060e0"/><rect x="5" y="8" width="18" height="6" fill="#f08428"/><rect x="10" y="14" width="13" height="9" fill="#4c98f4"/><path d="M10 17h13M10 20h13M14.300 14v9M18.600 14v9" stroke="#cce0fc" stroke-width="0.900"/></svg>
<div style="left:0px;top:2px;width:1px;height:1281px;background:#808080;"></div>
<div style="left:972px;top:494px;width:438px;height:158px;background:#f2f2f2;border:1px solid #a0a0a0;"></div>
<span style="left:1010.00px;top:506.24px;font-size:18.5px;color:#000;transform:scaleX(0.9692);">Учитывать ПНР только &quot;Вхолостую&quot;</span>
<span style="left:1339.50px;top:506.24px;font-size:18.5px;color:#000;transform:scaleX(0.9867);">Ctrl+T</span>
<span style="left:1010.00px;top:537.24px;font-size:18.5px;color:#000;transform:scaleX(0.9606);">Обновить признак ПР/НПР для ЛС/ОСР</span>
<div style="left:978px;top:567px;width:423px;height:1px;background:#a0a0a0;"></div>
<div style="left:978px;top:568px;width:423px;height:1px;background:#ffffff;"></div>
<div style="left:976px;top:573px;width:426px;height:31px;background:#0078d7;"></div>
<span style="left:1010.00px;top:581.24px;font-size:18.5px;color:#fff;transform:scaleX(0.9638);">Экспорт</span>
<svg style="left:1388px;top:583px;" width="7" height="11" viewBox="0 0 7 11"><path d="M0.500 0l5.500 5.500l-5.500 5.500z" fill="#fff"/></svg>
<div style="left:978px;top:611px;width:423px;height:1px;background:#a0a0a0;"></div>
<div style="left:978px;top:612px;width:423px;height:1px;background:#ffffff;"></div>
<span style="left:1010.00px;top:624.74px;font-size:18.5px;color:#000;transform:scaleX(0.9681);">Показывать итоги</span>
<svg style="left:1388px;top:627px;" width="7" height="11" viewBox="0 0 7 11"><path d="M0.500 0l5.500 5.500l-5.500 5.500z" fill="#000"/></svg>
<div style="left:1401px;top:569px;width:261px;height:112px;background:#f2f2f2;border:1px solid #a0a0a0;"></div>
<span style="left:1438.70px;top:580.74px;font-size:18.5px;color:#000;transform:scaleX(0.9291);">Экспорт в Excel</span>
<span style="left:1438.70px;top:612.24px;font-size:18.5px;color:#000;transform:scaleX(0.9185);">Экспорт в PDF</span>
<div style="left:1407px;top:643px;width:250px;height:1px;background:#a0a0a0;"></div>
<div style="left:1407px;top:644px;width:250px;height:1px;background:#ffffff;"></div>
<div style="left:1435px;top:648px;width:222px;height:29px;background:#0078d7;"></div>
<div style="left:1406px;top:648px;width:27px;height:29px;background:#e5f1fb;border:1px solid #cce4f7;"></div>
<span style="left:1438.70px;top:656.74px;font-size:18.5px;color:#fff;transform:scaleX(0.9299);">Экспорт в XML (ГГЭ)</span>
<div style="left:1401px;top:638px;width:260px;height:43px;border:3px solid #ff0000;"></div>
<svg style="left:1408px;top:578.5px" width="21.6" height="21.6" viewBox="0 0 24 24"><rect x="1.500" y="1.500" width="20" height="20" fill="#eef4ee" stroke="#3f803f" stroke-width="2"/><rect x="3" y="3" width="17" height="17" fill="none" stroke="#cfe2cf" stroke-width="1"/><path d="M5 6.500h4.300l9 10.500h-4.300z" fill="#2e8c2e"/><path d="M18.300 6.500h-4.300l-9 10.500h4.300z" fill="#54b054"/></svg>
<svg style="left:1408px;top:610px" width="21.6" height="21.6" viewBox="0 0 24 24"><path d="M6.500 0.500h13l4 4v18.500h-17z" fill="#fff" stroke="#dcdcdc"/><rect x="0" y="2.500" width="21.500" height="9.300" fill="#ee1010"/><text x="10.800" y="10.300" font-size="8.600" font-weight="bold" fill="#fff" text-anchor="middle" font-family="Liberation Sans,sans-serif" textLength="17" lengthAdjust="spacingAndGlyphs">PDF</text><path d="M6.500 23c2.500-5 5.500-7.500 9-8.500c-2 2.500-3.500 5.500-4.500 8.500zM12.500 23c1.500-4.500 4.500-8 9.500-9.500c-3.500 3-5 6-5.500 9.500z" fill="#e01818"/><path d="M18.500 23c0.500-3 2-5.500 4.500-7v2c-1.200 1.500-2 3-2.200 5z" fill="#e01818"/></svg>
<svg style="left:1407.5px;top:651.5px" width="24" height="24" viewBox="0 0 24 24"><path d="M8.500 0.500h14.500v6h-14.500z" fill="#fff" stroke="#c4c4c4"/><ellipse cx="2.600" cy="7" rx="2.600" ry="3.700" fill="#00e27e"/><rect x="4" y="3" width="20" height="9.800" rx="1" fill="#1068ec"/><text x="14.200" y="11" font-size="9" font-weight="bold" fill="#fff" text-anchor="middle" font-family="Liberation Sans,sans-serif" textLength="18" lengthAdjust="spacingAndGlyphs">XML</text><rect x="2.300" y="13.200" width="21" height="8.800" fill="#f2e2f2" stroke="#8c8c8c"/><text x="12.800" y="21" font-size="9.500" font-weight="bold" fill="#000" text-anchor="middle" font-family="Liberation Sans,sans-serif" textLength="17" lengthAdjust="spacingAndGlyphs">ГГЭ</text></svg>
</body></html>
